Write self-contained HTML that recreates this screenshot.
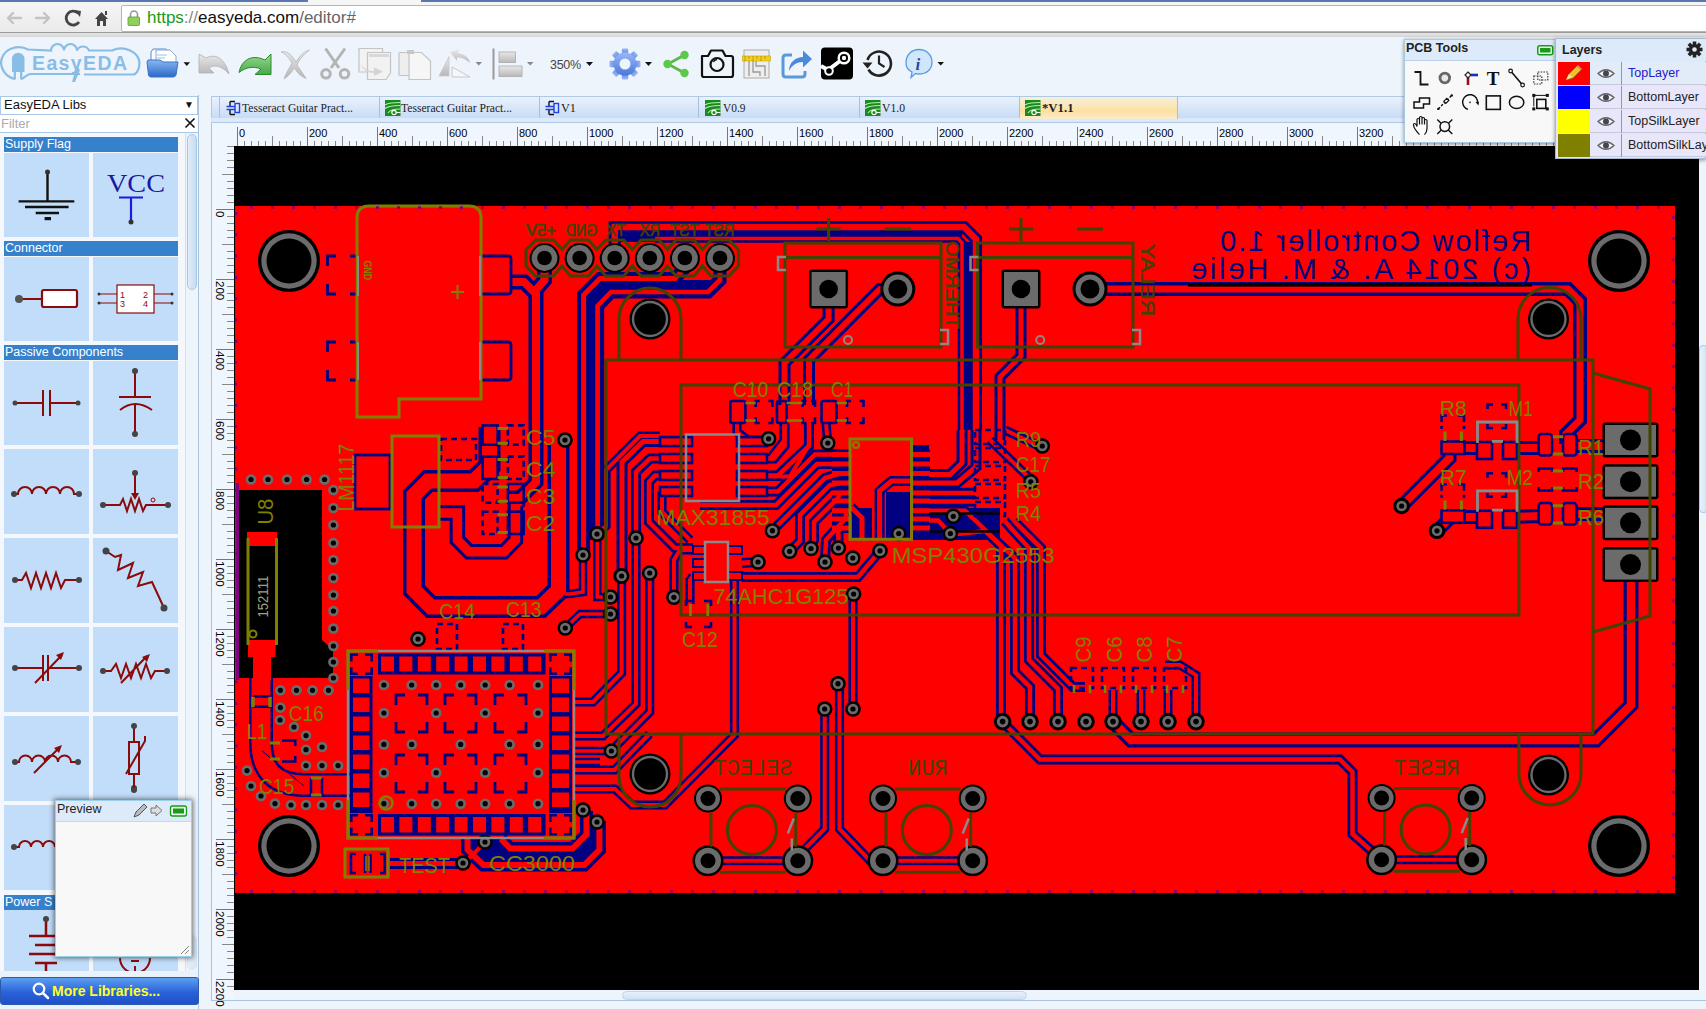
<!DOCTYPE html><html><head><meta charset="utf-8"><style>
*{margin:0;padding:0;box-sizing:border-box}
html,body{width:1706px;height:1009px;overflow:hidden;background:#eef4fc;font-family:"Liberation Sans",sans-serif;position:relative}
.a{position:absolute}
.t{position:absolute;white-space:nowrap}
</style></head><body>
<div class="a" style="left:0;top:0;width:1706px;height:37px;background:linear-gradient(#f6f6f6,#e9e9e9);border-bottom:1px solid #a9a9a9"></div><div class="a" style="left:0;top:0;width:308px;height:1.5px;background:#5a78b0"></div><div class="a" style="left:421px;top:0;width:1285px;height:1.5px;background:#5a78b0"></div><div class="a" style="left:121px;top:5px;width:1600px;height:27px;background:#fff;border:1px solid #b5b5b5;border-radius:2px"></div><div class="a" style="left:0;top:32px;width:1706px;height:5px;background:linear-gradient(#e4e4e4,#d8d8d8);border-top:1px solid #9a9a9a"></div><svg class="a" style="left:0;top:0" width="121" height="36">
<g stroke="#c4c4c4" stroke-width="2.4" fill="none" stroke-linecap="round" stroke-linejoin="round">
<path d="M8 18 H21 M8 18 L13 13 M8 18 L13 23"/>
<path d="M49 18 H36 M49 18 L44 13 M49 18 L44 23"/>
</g>
<path d="M78 13 A7 7 0 1 0 79 22" stroke="#444" stroke-width="2.8" fill="none"/>
<path d="M74 10 L81 11 L80 17 Z" fill="#444"/>
<path d="M95 19 L101.5 12 L108 19 L106 19 L106 26 L103 26 L103 21 L100 21 L100 26 L97 26 L97 19 Z" fill="#444"/>
<rect x="105" y="11" width="2" height="4" fill="#444"/>

</svg><svg class="a" style="left:125px;top:8px" width="20" height="22"><path d="M5.5 9.5 V6.5 A3.5 3.5 0 0 1 12.5 6.5 V9.5" stroke="#999" stroke-width="1.6" fill="none"/><rect x="3" y="9" width="11.5" height="8.5" rx="1" fill="#8fd05a" stroke="#5a9a2a" stroke-width="0.8"/></svg><div class="t" style="left:147px;top:8px;font-size:17px;line-height:20px;color:#444"><span style="color:#1a9a1a">https</span><span style="color:#888">://</span><span style="color:#111">easyeda.com</span><span style="color:#666">/editor#</span></div><div class="a" style="left:0;top:37px;width:1706px;height:58px;background:#eef4fc"></div><svg class="a" style="left:0;top:0" width="1000" height="95"><g fill="none" stroke="#88bde6" stroke-width="2.2">
<path d="M14.5 79 C4 76 -1 66 2 58 C5 49 18 44 28 49.5 L51 50.5 A6.5 6.5 0 0 1 64 50.5 A6.5 6.5 0 0 1 77 50.5 A6.5 6.5 0 0 1 89 50.5 L112 50.5 C124 45 139 52 139.5 63 C139.5 70 136 74.5 133 74.5 L84 74.5 M80 74 L30 74 C26 75 24 78 21.5 79"/>
</g>
<path d="M12 72 V59 A6.2 6.2 0 0 1 24.5 59 V72 Z" fill="#88bde6"/>
<path d="M14.8 72 V79.5 M21.2 72 V79.5" stroke="#88bde6" stroke-width="2.2"/>
<text x="32" y="69.5" font-family='"Liberation Sans",sans-serif' font-weight="bold" font-size="19.5" fill="#88bde6" textLength="96" lengthAdjust="spacing" letter-spacing="1">EasyEDA</text>
<path d="M76.5 66 L72 82 L75 82 L80 70 Z" fill="#88bde6"/><defs><linearGradient id="fg" x1="0" y1="0" x2="0" y2="1"><stop offset="0" stop-color="#8ab8f0"/><stop offset="1" stop-color="#2a6ac8"/></linearGradient>
<linearGradient id="gg" x1="0" y1="0" x2="0" y2="1"><stop offset="0" stop-color="#98d890"/><stop offset="1" stop-color="#48a848"/></linearGradient>
<linearGradient id="gr" x1="0" y1="0" x2="0" y2="1"><stop offset="0" stop-color="#e8e8e8"/><stop offset="1" stop-color="#b8b8b8"/></linearGradient>
<linearGradient id="gear" x1="0" y1="0" x2="0" y2="1"><stop offset="0" stop-color="#9ab8f8"/><stop offset="1" stop-color="#4a78d8"/></linearGradient></defs>
<path d="M151 62 V52 L153 49 H166 L172 54 V62 Z" fill="#f8fbff" stroke="#5a8ad0" stroke-width="1"/>
<path d="M156 50 H170 L176 56 V63 H156 Z" fill="#fff" stroke="#8aa8d0" stroke-width="1"/>
<path d="M157 55 H167 M157 58 H165" stroke="#9ac0e8" stroke-width="1"/>
<path d="M147 62 L148 60 H160 L163 62 H178 L176 75 Q175.5 77 173 77 H151 Q149 77 148.5 75 Z" fill="url(#fg)" stroke="#3a72c8" stroke-width="1"/>
<path d="M183.5 62.3 H190 L186.8 66 Z" fill="#111"/><path d="M199 54 L199 73 L214 73 L209 68 C215 64 222 66 229 74 C226 62 218 52 206 58 Z" fill="url(#gr)" stroke="#b0b0b0" stroke-width="0.8"/><path d="M271 54 L271 74.5 L255 74.5 L261 69 C254 66 246 67 239 72.5 C241 62 250 53 265 60 Z" fill="url(#gg)" stroke="#2a8a2a" stroke-width="1"/><path d="M281 52 C288 50 292 56 296 62 C300 56 304 51 309.5 50 C303 55 299 60 297 65 C301 71 304 75 306 78.5 C300 76 297 72 294.5 68 C291 73 288 77 284 78.7 C286 73 290 67 292 63 C289 58 285 53 281 52 Z" fill="url(#gr)" stroke="#a8a8a8" stroke-width="0.6"/><g stroke="#b4b4b4" stroke-width="3" fill="none"><path d="M325.5 48.5 L339 68 M345 48.5 L331 68"/><circle cx="326" cy="73.8" r="4.3"/><circle cx="344.5" cy="73.8" r="4.3"/></g><g fill="#f2f2f2" stroke="#c4c4c4" stroke-width="1.2"><path d="M359 48.5 H382.5 V72 H359 Z"/><path d="M367.5 52.5 H390.5 V73 L386 79.5 H367.5 Z"/></g><rect x="369" y="54" width="20" height="3" fill="#d8d8d8"/><path d="M361 64 Q366 72 374 71 V67.5 L383 71.5 L374 76 V73 Q364 73 361 64 Z" fill="#d4d4d4"/><g fill="#eeeeee" stroke="#c4c4c4" stroke-width="1.2"><rect x="399" y="52.5" width="22.5" height="23" rx="1"/><path d="M409 52.5 H421.5 L430.5 61 V79.5 H409 Z" fill="#f6f6f6"/></g><path d="M407 50 H414 V54 H407 Z" fill="#c8c8c8"/><path d="M439 76 L449 56.5 V76 Z" fill="url(#gr)" stroke="#c8c8c8" stroke-width="0.8"/><path d="M452 67 L470 77 H452 Z" fill="#f4f8fc" stroke="#c8c8c8" stroke-width="1"/><path d="M450 52 L459 49.5 L458 53 C465 54 469 58 470 63 C466 59 461 57 457 57.5 L457 61 Z" fill="url(#gr)"/><path d="M475.5 62 H482 L478.8 65.5 Z" fill="#888"/><rect x="492.5" y="48.5" width="2" height="31" fill="#999"/><rect x="499" y="52" width="16.5" height="10.5" fill="url(#gr)" stroke="#aaa" stroke-width="0.8"/><rect x="499" y="66" width="23" height="10.5" fill="url(#gr)" stroke="#aaa" stroke-width="0.8"/><path d="M527 62 H533.5 L530.2 65.5 Z" fill="#888"/><text x="550" y="69" font-family='"Liberation Sans",sans-serif' font-size="12.5" fill="#444" textLength="31">350%</text><path d="M586 62 H593 L589.5 66 Z" fill="#111"/><g transform="translate(625,64)"><g fill="url(#gear)"><rect x="-3.2" y="-15.5" width="6.4" height="8" rx="1" transform="rotate(0)"/><rect x="-3.2" y="-15.5" width="6.4" height="8" rx="1" transform="rotate(45)"/><rect x="-3.2" y="-15.5" width="6.4" height="8" rx="1" transform="rotate(90)"/><rect x="-3.2" y="-15.5" width="6.4" height="8" rx="1" transform="rotate(135)"/><rect x="-3.2" y="-15.5" width="6.4" height="8" rx="1" transform="rotate(180)"/><rect x="-3.2" y="-15.5" width="6.4" height="8" rx="1" transform="rotate(225)"/><rect x="-3.2" y="-15.5" width="6.4" height="8" rx="1" transform="rotate(270)"/><rect x="-3.2" y="-15.5" width="6.4" height="8" rx="1" transform="rotate(315)"/></g><circle r="11.5" fill="url(#gear)"/><circle r="5.5" fill="#eef4fc"/></g><path d="M645 62 H652 L648.5 66 Z" fill="#111"/><path d="M668 64 L684.5 55 M668 64 L684.5 73" stroke="#5ab84a" stroke-width="2.6"/><g fill="#5cc84c"><circle cx="667.5" cy="64" r="4.2"/><circle cx="684.5" cy="55" r="4.2"/><circle cx="684.5" cy="73" r="4.2"/></g><path d="M702 56 H708 L711 50.5 H722.5 L725.5 56 H731 Q733 56 733 58 V75 Q733 77 731 77 H704 Q702 77 702 75 Z" fill="none" stroke="#111" stroke-width="2.2" stroke-linejoin="round"/><circle cx="717" cy="64.5" r="6.5" fill="none" stroke="#111" stroke-width="2.2"/><path d="M713.5 62 A4 4 0 0 1 717 59.5" stroke="#111" stroke-width="1.3" fill="none"/><rect x="744" y="50" width="25" height="28" fill="#eee" stroke="#aaa" stroke-width="1"/><path d="M749 58 V76 M753 58 V72 H760 V76 M756 58 V66 H765 V76" stroke="#999" stroke-width="1.3" fill="none"/><rect x="742.5" y="56" width="28" height="5" fill="#f0d020" stroke="#c8a010" stroke-width="0.6"/><path d="M745 56 V61 M749 56 V59 M753 56 V61 M757 56 V59 M761 56 V61 M765 56 V59" stroke="#a08000" stroke-width="0.6"/><path d="M792 55 H786 Q783 55 783 58 V74 Q783 77 786 77 H802 Q805 77 805 74 V71" stroke="#5a98d8" stroke-width="3" fill="none"/><path d="M789 71 C789 62 796 57 803 57 V50.5 L812 59 L803 67.5 V62 C797 62 792 65 789 71 Z" fill="#4a8ad8"/><rect x="821" y="47.5" width="32" height="32" rx="4" fill="#000"/><circle cx="844" cy="58" r="5.3" fill="none" stroke="#fff" stroke-width="2.5"/><circle cx="844" cy="58" r="2.2" fill="#fff"/><path d="M821 66 L828 70 L840 61" stroke="#fff" stroke-width="4" fill="none"/><circle cx="829" cy="71" r="3.8" fill="#000" stroke="#fff" stroke-width="2"/><path d="M867.5 60 A12 12 0 1 1 868.5 69.5" stroke="#222" stroke-width="2.6" fill="none"/><path d="M862.5 62.5 L872.5 62.5 L867.5 68.5 Z" fill="#222"/><path d="M879 55.5 V63.5 L884.5 67" stroke="#222" stroke-width="2.2" fill="none"/><path d="M906 63 C906 54.5 912 49.5 919 49.5 C926 49.5 932 54.5 932 62 C932 70 926 74 919 74 C917.5 74 916.5 74 915.5 73.5 L911 77.5 L912 72 C908 70 906 67 906 63 Z" fill="#d0e6fa" stroke="#5a9ae0" stroke-width="1.3"/><text x="915.5" y="70" font-family='"Liberation Serif",serif' font-style="italic" font-weight="bold" font-size="17" fill="#1a4ab0">i</text><path d="M937.5 62 H944 L940.7 65.5 Z" fill="#111"/></svg><div class="a" style="left:0;top:95px;width:199px;height:914px;background:#eaf2fb;border-right:1px solid #a8c4e0"></div><div class="a" style="left:0;top:96px;width:198px;height:19px;background:#fff;border:1px solid #a8c8e8"></div><div class="t" style="left:4px;top:97px;font-size:13px;line-height:16px;color:#111">EasyEDA Libs</div><div class="t" style="left:184px;top:98px;font-size:10px;line-height:14px;color:#111">&#9660;</div><div class="a" style="left:0;top:115px;width:198px;height:18px;background:#fff;border-bottom:1px solid #a8c8e8"></div><div class="t" style="left:1px;top:116px;font-size:13px;line-height:15px;color:#aaa">Filter</div><svg class="a" style="left:184px;top:117px" width="12" height="12"><path d="M1.5 1.5 L10.5 10.5 M10.5 1.5 L1.5 10.5" stroke="#111" stroke-width="1.6"/></svg><div class="a" style="left:0;top:133px;width:198px;height:838px;background:#f4f8fd"></div><div class="a" style="left:185px;top:133px;width:13px;height:838px;background:#eef4fb;border-left:1px solid #d0e0f0"></div><div class="a" style="left:187px;top:134px;width:10px;height:156px;background:linear-gradient(90deg,#e0ecf8,#c8dcf2);border:1px solid #a8c8ea;border-radius:5px"></div><div class="a" style="left:187px;top:935px;width:10px;height:35px;background:linear-gradient(90deg,#e0ecf8,#c8dcf2);border:1px solid #c8d8ea;border-radius:5px;opacity:.6"></div><div class="a" style="left:4px;top:137px;width:174px;height:15px;background:#3681cc"></div><div class="t" style="left:5px;top:137px;font-size:12.5px;line-height:15px;color:#fff">Supply Flag</div><div class="a" style="left:4px;top:153px;width:85px;height:84px;background:#c2ddf9"></div><div class="a" style="left:93px;top:153px;width:85px;height:84px;background:#c2ddf9"></div><div class="a" style="left:4px;top:241px;width:174px;height:15px;background:#3681cc"></div><div class="t" style="left:5px;top:241px;font-size:12.5px;line-height:15px;color:#fff">Connector</div><div class="a" style="left:4px;top:257px;width:85px;height:84px;background:#c2ddf9"></div><div class="a" style="left:93px;top:257px;width:85px;height:84px;background:#c2ddf9"></div><div class="a" style="left:4px;top:345px;width:174px;height:15px;background:#3681cc"></div><div class="t" style="left:5px;top:345px;font-size:12.5px;line-height:15px;color:#fff">Passive Components</div><div class="a" style="left:4px;top:361px;width:85px;height:84px;background:#c2ddf9"></div><div class="a" style="left:93px;top:361px;width:85px;height:84px;background:#c2ddf9"></div><div class="a" style="left:4px;top:449px;width:85px;height:85px;background:#c2ddf9"></div><div class="a" style="left:93px;top:449px;width:85px;height:85px;background:#c2ddf9"></div><div class="a" style="left:4px;top:538px;width:85px;height:85px;background:#c2ddf9"></div><div class="a" style="left:93px;top:538px;width:85px;height:85px;background:#c2ddf9"></div><div class="a" style="left:4px;top:627px;width:85px;height:85px;background:#c2ddf9"></div><div class="a" style="left:93px;top:627px;width:85px;height:85px;background:#c2ddf9"></div><div class="a" style="left:4px;top:716px;width:85px;height:85px;background:#c2ddf9"></div><div class="a" style="left:93px;top:716px;width:85px;height:85px;background:#c2ddf9"></div><div class="a" style="left:4px;top:805px;width:85px;height:85px;background:#c2ddf9"></div><div class="a" style="left:93px;top:805px;width:85px;height:85px;background:#c2ddf9"></div><div class="a" style="left:4px;top:895px;width:174px;height:15px;background:#3681cc"></div><div class="t" style="left:5px;top:895px;font-size:12.5px;line-height:15px;color:#fff">Power S</div><div class="a" style="left:4px;top:910px;width:85px;height:61px;background:#c2ddf9"></div><div class="a" style="left:93px;top:910px;width:85px;height:61px;background:#c2ddf9"></div><svg class="a" style="left:0;top:133px" width="185" height="838"><g transform="translate(0,-133)"><path d="M47.5 172 V201.4 M18.6 201.4 H74.3 M25 207 H68.6 M35.7 213 H59 " stroke="#111" stroke-width="2.4"/><rect x="44.6" y="217" width="6.4" height="3.2" fill="#111"/><circle cx="47.5" cy="172" r="2.5" fill="#333"/></g><g transform="translate(0,-133)"><text x="107" y="192" font-family='"Liberation Serif",serif' font-size="25" fill="#1a1aa0" textLength="58" lengthAdjust="spacingAndGlyphs">VCC</text><path d="M119 197.5 H143 M131 197.5 V222" stroke="#1a1ae0" stroke-width="2.2"/><circle cx="131" cy="222" r="2.5" fill="#333"/></g><g transform="translate(0,-133)"><path d="M19 299 H42" stroke="#8b0a0a" stroke-width="2"/><rect x="42" y="290" width="35" height="17" rx="2" fill="#fff" stroke="#8b0a0a" stroke-width="2.2"/><circle cx="19" cy="299" r="4" fill="#555"/></g><g transform="translate(0,-133)"><rect x="117" y="285" width="37" height="28" fill="#fff" stroke="#8b0a0a" stroke-width="1.2"/><path d="M99 294 H117 M99 303 H117 M154 294 H172 M154 303 H172" stroke="#8b0a0a" stroke-width="1.2"/><g fill="#333"><circle cx="99" cy="294" r="1.5"/><circle cx="99" cy="303" r="1.5"/><circle cx="172" cy="294" r="1.5"/><circle cx="172" cy="303" r="1.5"/></g><text x="120" y="298" font-size="9" fill="#8b0a0a" font-family='"Liberation Sans",sans-serif'>1</text><text x="120" y="307" font-size="9" fill="#8b0a0a" font-family='"Liberation Sans",sans-serif'>3</text><text x="143" y="298" font-size="9" fill="#8b0a0a" font-family='"Liberation Sans",sans-serif'>2</text><text x="143" y="307" font-size="9" fill="#8b0a0a" font-family='"Liberation Sans",sans-serif'>4</text></g><g transform="translate(0,-133)"><path d="M15 403 H43 M50 403 H78 M43 390 V416 M50 390 V416" stroke="#8b0a0a" stroke-width="2"/><circle cx="15" cy="403" r="2.5" fill="#444"/><circle cx="78" cy="403" r="2.5" fill="#444"/></g><g transform="translate(0,-133)"><path d="M135 371 V397 M119 397 H151 M135 404 V434" stroke="#8b0a0a" stroke-width="2"/><path d="M120 410 Q135 398 152 410" stroke="#8b0a0a" stroke-width="2" fill="none"/><circle cx="135" cy="371" r="3" fill="#444"/><circle cx="135" cy="434" r="3" fill="#444"/></g><g transform="translate(0,-133)"><path d="M14 494 H18 A7 7 0 0 1 32 494 A7 7 0 0 1 46 494 A7 7 0 0 1 60 494 A7 7 0 0 1 74 494 H79" stroke="#8b0a0a" stroke-width="2" fill="none"/><circle cx="14" cy="494" r="3" fill="#444"/><circle cx="79" cy="494" r="3" fill="#444"/></g><g transform="translate(0,-133)"><path d="M103 505 H120 L123 499 L127 511 L131 499 L135 511 L139 499 L143 511 L146 505 H168 M135 473 V495" stroke="#8b0a0a" stroke-width="2" fill="none"/><path d="M131 493 L139 493 L135 500 Z" fill="#8b0a0a"/><circle cx="153" cy="500" r="2" fill="none" stroke="#8b0a0a"/><circle cx="103" cy="505" r="3" fill="#444"/><circle cx="168" cy="505" r="3" fill="#444"/><circle cx="135" cy="473" r="3" fill="#444"/></g><g transform="translate(0,-133)"><path d="M15 580 H22 L26 573 L31 588 L36 573 L41 588 L46 573 L51 588 L56 573 L61 588 L65 580 H79" stroke="#8b0a0a" stroke-width="2" fill="none"/><circle cx="15" cy="580" r="3" fill="#444"/><circle cx="79" cy="580" r="3" fill="#444"/></g><g transform="translate(0,-133)"><path d="M106 551 L115 557 L121 555 L118 570 L133 563 L128 578 L143 572 L138 586 L152 582 L158 595 L164 608" stroke="#8b0a0a" stroke-width="2" fill="none"/><circle cx="106" cy="551" r="3.5" fill="#444"/><circle cx="164" cy="608" r="3.5" fill="#444"/></g><g transform="translate(0,-133)"><path d="M15 668 H43 M48 668 H79 M43 655 V681 M48 655 V681 M35 683 L62 655" stroke="#8b0a0a" stroke-width="2" fill="none"/><path d="M64 652 L56 655 L61 660 Z" fill="#8b0a0a"/><circle cx="15" cy="668" r="3" fill="#444"/><circle cx="79" cy="668" r="3" fill="#444"/></g><g transform="translate(0,-133)"><path d="M103 671 H111 L116 664 L121 678 L126 664 L131 678 L136 664 L141 678 L146 664 L151 678 L155 671 H167 M121 683 L147 656" stroke="#8b0a0a" stroke-width="2" fill="none"/><path d="M150 654 L142 657 L147 662 Z" fill="#8b0a0a"/><circle cx="103" cy="671" r="3" fill="#444"/><circle cx="167" cy="671" r="3" fill="#444"/></g><g transform="translate(0,-133)"><path d="M15 762 H19 A6.5 6.5 0 0 1 32 762 A6.5 6.5 0 0 1 45 762 A6.5 6.5 0 0 1 58 762 A6.5 6.5 0 0 1 71 762 H78 M34 773 L59 748" stroke="#8b0a0a" stroke-width="2" fill="none"/><path d="M62 745 L54 748 L59 753 Z" fill="#8b0a0a"/><circle cx="15" cy="762" r="3" fill="#444"/><circle cx="78" cy="762" r="3" fill="#444"/></g><g transform="translate(0,-133)"><path d="M134 726 V742 M134 774 V790 M126 774 L145 741 V736" stroke="#8b0a0a" stroke-width="2" fill="none"/><rect x="129" y="742" width="10" height="32" fill="none" stroke="#8b0a0a" stroke-width="2"/><circle cx="134" cy="726" r="3" fill="#444"/><circle cx="134" cy="790" r="3" fill="#444"/></g><g transform="translate(0,-133)"><path d="M14 847 H19 A6 6 0 0 1 31 847 A6 6 0 0 1 43 847 A6 6 0 0 1 55 847" stroke="#8b0a0a" stroke-width="2" fill="none"/><circle cx="14" cy="847" r="3" fill="#444"/><circle cx="134" cy="788" r="3" fill="#444"/><path d="M134 780 V788" stroke="#8b0a0a" stroke-width="2"/></g><g transform="translate(0,-133)"><path d="M46 920 V935 M29 936 H57 M35 945 H57 M29 954 H57 M35 963 H57 M46 963 V971" stroke="#8b0a0a" stroke-width="2.5"/><circle cx="46" cy="919" r="3" fill="#444"/><path d="M120 958 A15 15 0 0 0 150 958" stroke="#8b0a0a" stroke-width="2" fill="none"/><path d="M131 961 H139 M135 966 V971" stroke="#8b0a0a" stroke-width="2"/></g></svg><div class="a" style="left:0;top:977px;width:199px;height:28px;background:linear-gradient(#5d9ef0,#2a62d8 55%,#1e50c8);border:1px solid #2a5ab0;border-radius:3px"></div><svg class="a" style="left:32px;top:982px" width="18" height="18"><circle cx="7" cy="7" r="5.3" fill="none" stroke="#fff" stroke-width="2.2"/><path d="M11 11 L16 16" stroke="#fff" stroke-width="2.5" stroke-linecap="round"/></svg><div class="t" style="left:52px;top:983px;font-size:14px;line-height:16px;font-weight:bold;color:#ffff20">More Libraries...</div><div class="a" style="left:211px;top:95px;width:1495px;height:28px;background:#eef4fc"></div><div class="a" style="left:211px;top:96px;width:1495px;height:23px;background:linear-gradient(#eaf2fd,#c8dcf6);border:1px solid #b0c8e4"></div><div class="a" style="left:211px;top:118px;width:1495px;height:5px;background:#dde9f8;border-bottom:1px solid #b0c8e4"></div><div class="a" style="left:218.5px;top:97px;width:1px;height:21px;background:#a8c0dc"></div><svg class="a" style="left:226px;top:100px" width="16" height="16"><path d="M4 1.5 H9 M4 14.5 H9 M4 1.5 V6 M4 10 V14.5" stroke="#111" stroke-width="1.4" fill="none"/><rect x="9" y="3.5" width="4.5" height="9" fill="none" stroke="#2040e0" stroke-width="1.4"/><path d="M0.5 6.5 H9 M0.5 9.5 H9" stroke="#2040e0" stroke-width="1.4"/></svg><div class="t" style="left:242px;top:98.5px;font-family:'Liberation Serif', serif;font-size:13.5px;line-height:16px;color:#222"><svg width="115" height="16" style="display:block;overflow:visible"><text x="0" y="12.5" font-family="Liberation Serif, serif" font-size="13.5" fill="#222" textLength="111" lengthAdjust="spacingAndGlyphs">Tesseract Guitar Pract...</text></svg></div><div class="a" style="left:378.5px;top:97px;width:1px;height:21px;background:#a8c0dc"></div><svg class="a" style="left:385px;top:99.5px" width="16" height="17"><rect x="0" y="0" width="15.5" height="16" fill="#1a8a1a"/><path d="M0 5 Q4 2.5 15.5 2.5 M0 8.5 Q4 5.5 15.5 5.5 M3 13 Q5 9 15.5 9" stroke="#b8ecb8" stroke-width="1.1" fill="none"/><circle cx="9" cy="12.5" r="2.2" fill="none" stroke="#fff" stroke-width="1.2"/><path d="M11 12.5 H15.5" stroke="#fff" stroke-width="1.1"/></svg><div class="t" style="left:401px;top:98.5px;font-family:'Liberation Serif', serif;font-size:13.5px;line-height:16px;color:#222"><svg width="115" height="16" style="display:block;overflow:visible"><text x="0" y="12.5" font-family="Liberation Serif, serif" font-size="13.5" fill="#222" textLength="111" lengthAdjust="spacingAndGlyphs">Tesseract Guitar Pract...</text></svg></div><div class="a" style="left:538.7px;top:97px;width:1px;height:21px;background:#a8c0dc"></div><svg class="a" style="left:545px;top:100px" width="16" height="16"><path d="M4 1.5 H9 M4 14.5 H9 M4 1.5 V6 M4 10 V14.5" stroke="#111" stroke-width="1.4" fill="none"/><rect x="9" y="3.5" width="4.5" height="9" fill="none" stroke="#2040e0" stroke-width="1.4"/><path d="M0.5 6.5 H9 M0.5 9.5 H9" stroke="#2040e0" stroke-width="1.4"/></svg><div class="t" style="left:561px;top:98.5px;font-family:'Liberation Serif', serif;font-size:13.5px;line-height:16px;color:#222"><svg width="19" height="16" style="display:block;overflow:visible"><text x="0" y="12.5" font-family="Liberation Serif, serif" font-size="13.5" fill="#222" textLength="15" lengthAdjust="spacingAndGlyphs">V1</text></svg></div><div class="a" style="left:698.4px;top:97px;width:1px;height:21px;background:#a8c0dc"></div><svg class="a" style="left:705px;top:99.5px" width="16" height="17"><rect x="0" y="0" width="15.5" height="16" fill="#1a8a1a"/><path d="M0 5 Q4 2.5 15.5 2.5 M0 8.5 Q4 5.5 15.5 5.5 M3 13 Q5 9 15.5 9" stroke="#b8ecb8" stroke-width="1.1" fill="none"/><circle cx="9" cy="12.5" r="2.2" fill="none" stroke="#fff" stroke-width="1.2"/><path d="M11 12.5 H15.5" stroke="#fff" stroke-width="1.1"/></svg><div class="t" style="left:722.6px;top:98.5px;font-family:'Liberation Serif', serif;font-size:13.5px;line-height:16px;color:#222"><svg width="26.5" height="16" style="display:block;overflow:visible"><text x="0" y="12.5" font-family="Liberation Serif, serif" font-size="13.5" fill="#222" textLength="22.5" lengthAdjust="spacingAndGlyphs">V0.9</text></svg></div><div class="a" style="left:859px;top:97px;width:1px;height:21px;background:#a8c0dc"></div><svg class="a" style="left:864.5px;top:99.5px" width="16" height="17"><rect x="0" y="0" width="15.5" height="16" fill="#1a8a1a"/><path d="M0 5 Q4 2.5 15.5 2.5 M0 8.5 Q4 5.5 15.5 5.5 M3 13 Q5 9 15.5 9" stroke="#b8ecb8" stroke-width="1.1" fill="none"/><circle cx="9" cy="12.5" r="2.2" fill="none" stroke="#fff" stroke-width="1.2"/><path d="M11 12.5 H15.5" stroke="#fff" stroke-width="1.1"/></svg><div class="t" style="left:882px;top:98.5px;font-family:'Liberation Serif', serif;font-size:13.5px;line-height:16px;color:#222"><svg width="27" height="16" style="display:block;overflow:visible"><text x="0" y="12.5" font-family="Liberation Serif, serif" font-size="13.5" fill="#222" textLength="23" lengthAdjust="spacingAndGlyphs">V1.0</text></svg></div><div class="a" style="left:1018.5px;top:97px;width:1px;height:21px;background:#a8c0dc"></div><div class="a" style="left:1019.5px;top:97px;width:158.5px;height:22px;background:linear-gradient(#f6f0e0,#fde0a0 65%,#f8ecd0);border-right:1px solid #a8c0dc"></div><svg class="a" style="left:1024.6px;top:99.5px" width="16" height="17"><rect x="0" y="0" width="15.5" height="16" fill="#1a8a1a"/><path d="M0 5 Q4 2.5 15.5 2.5 M0 8.5 Q4 5.5 15.5 5.5 M3 13 Q5 9 15.5 9" stroke="#b8ecb8" stroke-width="1.1" fill="none"/><circle cx="9" cy="12.5" r="2.2" fill="none" stroke="#fff" stroke-width="1.2"/><path d="M11 12.5 H15.5" stroke="#fff" stroke-width="1.1"/></svg><div class="t" style="left:1042px;top:98.5px;font-family:'Liberation Serif', serif;font-size:13.5px;line-height:16px;color:#222;font-weight:bold"><svg width="35.5" height="16" style="display:block;overflow:visible"><text x="0" y="12.5" font-family="Liberation Serif, serif" font-size="13.5" fill="#222" textLength="31.5" lengthAdjust="spacingAndGlyphs" font-weight='bold'>*V1.1</text></svg></div><div class="a" style="left:211px;top:123px;width:1495px;height:23px;background:#f0f6fd"></div><div class="a" style="left:211px;top:123px;width:23px;height:877px;background:#f0f6fd;border-left:1px solid #a8c4e0"></div><svg class="a" style="left:0;top:0" width="1706" height="1009" font-family='"Liberation Sans", sans-serif' fill="#000"><line x1="237.5" y1="127" x2="237.5" y2="146" stroke="#777" stroke-width="1"/><text x="239.0" y="137" font-size="11">0</text><line x1="244.5" y1="141" x2="244.5" y2="146" stroke="#888" stroke-width="1"/><line x1="251.5" y1="141" x2="251.5" y2="146" stroke="#888" stroke-width="1"/><line x1="258.5" y1="141" x2="258.5" y2="146" stroke="#888" stroke-width="1"/><line x1="265.5" y1="141" x2="265.5" y2="146" stroke="#888" stroke-width="1"/><line x1="272.5" y1="136" x2="272.5" y2="146" stroke="#888" stroke-width="1"/><line x1="279.5" y1="141" x2="279.5" y2="146" stroke="#888" stroke-width="1"/><line x1="286.5" y1="141" x2="286.5" y2="146" stroke="#888" stroke-width="1"/><line x1="293.5" y1="141" x2="293.5" y2="146" stroke="#888" stroke-width="1"/><line x1="300.5" y1="141" x2="300.5" y2="146" stroke="#888" stroke-width="1"/><line x1="307.5" y1="127" x2="307.5" y2="146" stroke="#777" stroke-width="1"/><text x="309.0" y="137" font-size="11">200</text><line x1="314.5" y1="141" x2="314.5" y2="146" stroke="#888" stroke-width="1"/><line x1="321.5" y1="141" x2="321.5" y2="146" stroke="#888" stroke-width="1"/><line x1="328.5" y1="141" x2="328.5" y2="146" stroke="#888" stroke-width="1"/><line x1="335.5" y1="141" x2="335.5" y2="146" stroke="#888" stroke-width="1"/><line x1="342.5" y1="136" x2="342.5" y2="146" stroke="#888" stroke-width="1"/><line x1="349.5" y1="141" x2="349.5" y2="146" stroke="#888" stroke-width="1"/><line x1="356.5" y1="141" x2="356.5" y2="146" stroke="#888" stroke-width="1"/><line x1="363.5" y1="141" x2="363.5" y2="146" stroke="#888" stroke-width="1"/><line x1="370.5" y1="141" x2="370.5" y2="146" stroke="#888" stroke-width="1"/><line x1="377.5" y1="127" x2="377.5" y2="146" stroke="#777" stroke-width="1"/><text x="379.0" y="137" font-size="11">400</text><line x1="384.5" y1="141" x2="384.5" y2="146" stroke="#888" stroke-width="1"/><line x1="391.5" y1="141" x2="391.5" y2="146" stroke="#888" stroke-width="1"/><line x1="398.5" y1="141" x2="398.5" y2="146" stroke="#888" stroke-width="1"/><line x1="405.5" y1="141" x2="405.5" y2="146" stroke="#888" stroke-width="1"/><line x1="412.5" y1="136" x2="412.5" y2="146" stroke="#888" stroke-width="1"/><line x1="419.5" y1="141" x2="419.5" y2="146" stroke="#888" stroke-width="1"/><line x1="426.5" y1="141" x2="426.5" y2="146" stroke="#888" stroke-width="1"/><line x1="433.5" y1="141" x2="433.5" y2="146" stroke="#888" stroke-width="1"/><line x1="440.5" y1="141" x2="440.5" y2="146" stroke="#888" stroke-width="1"/><line x1="447.5" y1="127" x2="447.5" y2="146" stroke="#777" stroke-width="1"/><text x="449.0" y="137" font-size="11">600</text><line x1="454.5" y1="141" x2="454.5" y2="146" stroke="#888" stroke-width="1"/><line x1="461.5" y1="141" x2="461.5" y2="146" stroke="#888" stroke-width="1"/><line x1="468.5" y1="141" x2="468.5" y2="146" stroke="#888" stroke-width="1"/><line x1="475.5" y1="141" x2="475.5" y2="146" stroke="#888" stroke-width="1"/><line x1="482.5" y1="136" x2="482.5" y2="146" stroke="#888" stroke-width="1"/><line x1="489.5" y1="141" x2="489.5" y2="146" stroke="#888" stroke-width="1"/><line x1="496.5" y1="141" x2="496.5" y2="146" stroke="#888" stroke-width="1"/><line x1="503.5" y1="141" x2="503.5" y2="146" stroke="#888" stroke-width="1"/><line x1="510.5" y1="141" x2="510.5" y2="146" stroke="#888" stroke-width="1"/><line x1="517.5" y1="127" x2="517.5" y2="146" stroke="#777" stroke-width="1"/><text x="519.0" y="137" font-size="11">800</text><line x1="524.5" y1="141" x2="524.5" y2="146" stroke="#888" stroke-width="1"/><line x1="531.5" y1="141" x2="531.5" y2="146" stroke="#888" stroke-width="1"/><line x1="538.5" y1="141" x2="538.5" y2="146" stroke="#888" stroke-width="1"/><line x1="545.5" y1="141" x2="545.5" y2="146" stroke="#888" stroke-width="1"/><line x1="552.5" y1="136" x2="552.5" y2="146" stroke="#888" stroke-width="1"/><line x1="559.5" y1="141" x2="559.5" y2="146" stroke="#888" stroke-width="1"/><line x1="566.5" y1="141" x2="566.5" y2="146" stroke="#888" stroke-width="1"/><line x1="573.5" y1="141" x2="573.5" y2="146" stroke="#888" stroke-width="1"/><line x1="580.5" y1="141" x2="580.5" y2="146" stroke="#888" stroke-width="1"/><line x1="587.5" y1="127" x2="587.5" y2="146" stroke="#777" stroke-width="1"/><text x="589.0" y="137" font-size="11">1000</text><line x1="594.5" y1="141" x2="594.5" y2="146" stroke="#888" stroke-width="1"/><line x1="601.5" y1="141" x2="601.5" y2="146" stroke="#888" stroke-width="1"/><line x1="608.5" y1="141" x2="608.5" y2="146" stroke="#888" stroke-width="1"/><line x1="615.5" y1="141" x2="615.5" y2="146" stroke="#888" stroke-width="1"/><line x1="622.5" y1="136" x2="622.5" y2="146" stroke="#888" stroke-width="1"/><line x1="629.5" y1="141" x2="629.5" y2="146" stroke="#888" stroke-width="1"/><line x1="636.5" y1="141" x2="636.5" y2="146" stroke="#888" stroke-width="1"/><line x1="643.5" y1="141" x2="643.5" y2="146" stroke="#888" stroke-width="1"/><line x1="650.5" y1="141" x2="650.5" y2="146" stroke="#888" stroke-width="1"/><line x1="657.5" y1="127" x2="657.5" y2="146" stroke="#777" stroke-width="1"/><text x="659.0" y="137" font-size="11">1200</text><line x1="664.5" y1="141" x2="664.5" y2="146" stroke="#888" stroke-width="1"/><line x1="671.5" y1="141" x2="671.5" y2="146" stroke="#888" stroke-width="1"/><line x1="678.5" y1="141" x2="678.5" y2="146" stroke="#888" stroke-width="1"/><line x1="685.5" y1="141" x2="685.5" y2="146" stroke="#888" stroke-width="1"/><line x1="692.5" y1="136" x2="692.5" y2="146" stroke="#888" stroke-width="1"/><line x1="699.5" y1="141" x2="699.5" y2="146" stroke="#888" stroke-width="1"/><line x1="706.5" y1="141" x2="706.5" y2="146" stroke="#888" stroke-width="1"/><line x1="713.5" y1="141" x2="713.5" y2="146" stroke="#888" stroke-width="1"/><line x1="720.5" y1="141" x2="720.5" y2="146" stroke="#888" stroke-width="1"/><line x1="727.5" y1="127" x2="727.5" y2="146" stroke="#777" stroke-width="1"/><text x="729.0" y="137" font-size="11">1400</text><line x1="734.5" y1="141" x2="734.5" y2="146" stroke="#888" stroke-width="1"/><line x1="741.5" y1="141" x2="741.5" y2="146" stroke="#888" stroke-width="1"/><line x1="748.5" y1="141" x2="748.5" y2="146" stroke="#888" stroke-width="1"/><line x1="755.5" y1="141" x2="755.5" y2="146" stroke="#888" stroke-width="1"/><line x1="762.5" y1="136" x2="762.5" y2="146" stroke="#888" stroke-width="1"/><line x1="769.5" y1="141" x2="769.5" y2="146" stroke="#888" stroke-width="1"/><line x1="776.5" y1="141" x2="776.5" y2="146" stroke="#888" stroke-width="1"/><line x1="783.5" y1="141" x2="783.5" y2="146" stroke="#888" stroke-width="1"/><line x1="790.5" y1="141" x2="790.5" y2="146" stroke="#888" stroke-width="1"/><line x1="797.5" y1="127" x2="797.5" y2="146" stroke="#777" stroke-width="1"/><text x="799.0" y="137" font-size="11">1600</text><line x1="804.5" y1="141" x2="804.5" y2="146" stroke="#888" stroke-width="1"/><line x1="811.5" y1="141" x2="811.5" y2="146" stroke="#888" stroke-width="1"/><line x1="818.5" y1="141" x2="818.5" y2="146" stroke="#888" stroke-width="1"/><line x1="825.5" y1="141" x2="825.5" y2="146" stroke="#888" stroke-width="1"/><line x1="832.5" y1="136" x2="832.5" y2="146" stroke="#888" stroke-width="1"/><line x1="839.5" y1="141" x2="839.5" y2="146" stroke="#888" stroke-width="1"/><line x1="846.5" y1="141" x2="846.5" y2="146" stroke="#888" stroke-width="1"/><line x1="853.5" y1="141" x2="853.5" y2="146" stroke="#888" stroke-width="1"/><line x1="860.5" y1="141" x2="860.5" y2="146" stroke="#888" stroke-width="1"/><line x1="867.5" y1="127" x2="867.5" y2="146" stroke="#777" stroke-width="1"/><text x="869.0" y="137" font-size="11">1800</text><line x1="874.5" y1="141" x2="874.5" y2="146" stroke="#888" stroke-width="1"/><line x1="881.5" y1="141" x2="881.5" y2="146" stroke="#888" stroke-width="1"/><line x1="888.5" y1="141" x2="888.5" y2="146" stroke="#888" stroke-width="1"/><line x1="895.5" y1="141" x2="895.5" y2="146" stroke="#888" stroke-width="1"/><line x1="902.5" y1="136" x2="902.5" y2="146" stroke="#888" stroke-width="1"/><line x1="909.5" y1="141" x2="909.5" y2="146" stroke="#888" stroke-width="1"/><line x1="916.5" y1="141" x2="916.5" y2="146" stroke="#888" stroke-width="1"/><line x1="923.5" y1="141" x2="923.5" y2="146" stroke="#888" stroke-width="1"/><line x1="930.5" y1="141" x2="930.5" y2="146" stroke="#888" stroke-width="1"/><line x1="937.5" y1="127" x2="937.5" y2="146" stroke="#777" stroke-width="1"/><text x="939.0" y="137" font-size="11">2000</text><line x1="944.5" y1="141" x2="944.5" y2="146" stroke="#888" stroke-width="1"/><line x1="951.5" y1="141" x2="951.5" y2="146" stroke="#888" stroke-width="1"/><line x1="958.5" y1="141" x2="958.5" y2="146" stroke="#888" stroke-width="1"/><line x1="965.5" y1="141" x2="965.5" y2="146" stroke="#888" stroke-width="1"/><line x1="972.5" y1="136" x2="972.5" y2="146" stroke="#888" stroke-width="1"/><line x1="979.5" y1="141" x2="979.5" y2="146" stroke="#888" stroke-width="1"/><line x1="986.5" y1="141" x2="986.5" y2="146" stroke="#888" stroke-width="1"/><line x1="993.5" y1="141" x2="993.5" y2="146" stroke="#888" stroke-width="1"/><line x1="1000.5" y1="141" x2="1000.5" y2="146" stroke="#888" stroke-width="1"/><line x1="1007.5" y1="127" x2="1007.5" y2="146" stroke="#777" stroke-width="1"/><text x="1009.0" y="137" font-size="11">2200</text><line x1="1014.5" y1="141" x2="1014.5" y2="146" stroke="#888" stroke-width="1"/><line x1="1021.5" y1="141" x2="1021.5" y2="146" stroke="#888" stroke-width="1"/><line x1="1028.5" y1="141" x2="1028.5" y2="146" stroke="#888" stroke-width="1"/><line x1="1035.5" y1="141" x2="1035.5" y2="146" stroke="#888" stroke-width="1"/><line x1="1042.5" y1="136" x2="1042.5" y2="146" stroke="#888" stroke-width="1"/><line x1="1049.5" y1="141" x2="1049.5" y2="146" stroke="#888" stroke-width="1"/><line x1="1056.5" y1="141" x2="1056.5" y2="146" stroke="#888" stroke-width="1"/><line x1="1063.5" y1="141" x2="1063.5" y2="146" stroke="#888" stroke-width="1"/><line x1="1070.5" y1="141" x2="1070.5" y2="146" stroke="#888" stroke-width="1"/><line x1="1077.5" y1="127" x2="1077.5" y2="146" stroke="#777" stroke-width="1"/><text x="1079.0" y="137" font-size="11">2400</text><line x1="1084.5" y1="141" x2="1084.5" y2="146" stroke="#888" stroke-width="1"/><line x1="1091.5" y1="141" x2="1091.5" y2="146" stroke="#888" stroke-width="1"/><line x1="1098.5" y1="141" x2="1098.5" y2="146" stroke="#888" stroke-width="1"/><line x1="1105.5" y1="141" x2="1105.5" y2="146" stroke="#888" stroke-width="1"/><line x1="1112.5" y1="136" x2="1112.5" y2="146" stroke="#888" stroke-width="1"/><line x1="1119.5" y1="141" x2="1119.5" y2="146" stroke="#888" stroke-width="1"/><line x1="1126.5" y1="141" x2="1126.5" y2="146" stroke="#888" stroke-width="1"/><line x1="1133.5" y1="141" x2="1133.5" y2="146" stroke="#888" stroke-width="1"/><line x1="1140.5" y1="141" x2="1140.5" y2="146" stroke="#888" stroke-width="1"/><line x1="1147.5" y1="127" x2="1147.5" y2="146" stroke="#777" stroke-width="1"/><text x="1149.0" y="137" font-size="11">2600</text><line x1="1154.5" y1="141" x2="1154.5" y2="146" stroke="#888" stroke-width="1"/><line x1="1161.5" y1="141" x2="1161.5" y2="146" stroke="#888" stroke-width="1"/><line x1="1168.5" y1="141" x2="1168.5" y2="146" stroke="#888" stroke-width="1"/><line x1="1175.5" y1="141" x2="1175.5" y2="146" stroke="#888" stroke-width="1"/><line x1="1182.5" y1="136" x2="1182.5" y2="146" stroke="#888" stroke-width="1"/><line x1="1189.5" y1="141" x2="1189.5" y2="146" stroke="#888" stroke-width="1"/><line x1="1196.5" y1="141" x2="1196.5" y2="146" stroke="#888" stroke-width="1"/><line x1="1203.5" y1="141" x2="1203.5" y2="146" stroke="#888" stroke-width="1"/><line x1="1210.5" y1="141" x2="1210.5" y2="146" stroke="#888" stroke-width="1"/><line x1="1217.5" y1="127" x2="1217.5" y2="146" stroke="#777" stroke-width="1"/><text x="1219.0" y="137" font-size="11">2800</text><line x1="1224.5" y1="141" x2="1224.5" y2="146" stroke="#888" stroke-width="1"/><line x1="1231.5" y1="141" x2="1231.5" y2="146" stroke="#888" stroke-width="1"/><line x1="1238.5" y1="141" x2="1238.5" y2="146" stroke="#888" stroke-width="1"/><line x1="1245.5" y1="141" x2="1245.5" y2="146" stroke="#888" stroke-width="1"/><line x1="1252.5" y1="136" x2="1252.5" y2="146" stroke="#888" stroke-width="1"/><line x1="1259.5" y1="141" x2="1259.5" y2="146" stroke="#888" stroke-width="1"/><line x1="1266.5" y1="141" x2="1266.5" y2="146" stroke="#888" stroke-width="1"/><line x1="1273.5" y1="141" x2="1273.5" y2="146" stroke="#888" stroke-width="1"/><line x1="1280.5" y1="141" x2="1280.5" y2="146" stroke="#888" stroke-width="1"/><line x1="1287.5" y1="127" x2="1287.5" y2="146" stroke="#777" stroke-width="1"/><text x="1289.0" y="137" font-size="11">3000</text><line x1="1294.5" y1="141" x2="1294.5" y2="146" stroke="#888" stroke-width="1"/><line x1="1301.5" y1="141" x2="1301.5" y2="146" stroke="#888" stroke-width="1"/><line x1="1308.5" y1="141" x2="1308.5" y2="146" stroke="#888" stroke-width="1"/><line x1="1315.5" y1="141" x2="1315.5" y2="146" stroke="#888" stroke-width="1"/><line x1="1322.5" y1="136" x2="1322.5" y2="146" stroke="#888" stroke-width="1"/><line x1="1329.5" y1="141" x2="1329.5" y2="146" stroke="#888" stroke-width="1"/><line x1="1336.5" y1="141" x2="1336.5" y2="146" stroke="#888" stroke-width="1"/><line x1="1343.5" y1="141" x2="1343.5" y2="146" stroke="#888" stroke-width="1"/><line x1="1350.5" y1="141" x2="1350.5" y2="146" stroke="#888" stroke-width="1"/><line x1="1357.5" y1="127" x2="1357.5" y2="146" stroke="#777" stroke-width="1"/><text x="1359.0" y="137" font-size="11">3200</text><line x1="1364.5" y1="141" x2="1364.5" y2="146" stroke="#888" stroke-width="1"/><line x1="1371.5" y1="141" x2="1371.5" y2="146" stroke="#888" stroke-width="1"/><line x1="1378.5" y1="141" x2="1378.5" y2="146" stroke="#888" stroke-width="1"/><line x1="1385.5" y1="141" x2="1385.5" y2="146" stroke="#888" stroke-width="1"/><line x1="1392.5" y1="136" x2="1392.5" y2="146" stroke="#888" stroke-width="1"/><line x1="1399.5" y1="141" x2="1399.5" y2="146" stroke="#888" stroke-width="1"/><line x1="1406.5" y1="141" x2="1406.5" y2="146" stroke="#888" stroke-width="1"/><line x1="1413.5" y1="141" x2="1413.5" y2="146" stroke="#888" stroke-width="1"/><line x1="1420.5" y1="141" x2="1420.5" y2="146" stroke="#888" stroke-width="1"/><line x1="1427.5" y1="127" x2="1427.5" y2="146" stroke="#777" stroke-width="1"/><text x="1429.0" y="137" font-size="11">3400</text><line x1="1434.5" y1="141" x2="1434.5" y2="146" stroke="#888" stroke-width="1"/><line x1="1441.5" y1="141" x2="1441.5" y2="146" stroke="#888" stroke-width="1"/><line x1="1448.5" y1="141" x2="1448.5" y2="146" stroke="#888" stroke-width="1"/><line x1="1455.5" y1="141" x2="1455.5" y2="146" stroke="#888" stroke-width="1"/><line x1="1462.5" y1="136" x2="1462.5" y2="146" stroke="#888" stroke-width="1"/><line x1="1469.5" y1="141" x2="1469.5" y2="146" stroke="#888" stroke-width="1"/><line x1="1476.5" y1="141" x2="1476.5" y2="146" stroke="#888" stroke-width="1"/><line x1="1483.5" y1="141" x2="1483.5" y2="146" stroke="#888" stroke-width="1"/><line x1="1490.5" y1="141" x2="1490.5" y2="146" stroke="#888" stroke-width="1"/><line x1="1497.5" y1="127" x2="1497.5" y2="146" stroke="#777" stroke-width="1"/><text x="1499.0" y="137" font-size="11">3600</text><line x1="1504.5" y1="141" x2="1504.5" y2="146" stroke="#888" stroke-width="1"/><line x1="1511.5" y1="141" x2="1511.5" y2="146" stroke="#888" stroke-width="1"/><line x1="1518.5" y1="141" x2="1518.5" y2="146" stroke="#888" stroke-width="1"/><line x1="1525.5" y1="141" x2="1525.5" y2="146" stroke="#888" stroke-width="1"/><line x1="1532.5" y1="136" x2="1532.5" y2="146" stroke="#888" stroke-width="1"/><line x1="1539.5" y1="141" x2="1539.5" y2="146" stroke="#888" stroke-width="1"/><line x1="1546.5" y1="141" x2="1546.5" y2="146" stroke="#888" stroke-width="1"/><line x1="1553.5" y1="141" x2="1553.5" y2="146" stroke="#888" stroke-width="1"/><line x1="1560.5" y1="141" x2="1560.5" y2="146" stroke="#888" stroke-width="1"/><line x1="1567.5" y1="127" x2="1567.5" y2="146" stroke="#777" stroke-width="1"/><text x="1569.0" y="137" font-size="11">3800</text><line x1="1574.5" y1="141" x2="1574.5" y2="146" stroke="#888" stroke-width="1"/><line x1="1581.5" y1="141" x2="1581.5" y2="146" stroke="#888" stroke-width="1"/><line x1="1588.5" y1="141" x2="1588.5" y2="146" stroke="#888" stroke-width="1"/><line x1="1595.5" y1="141" x2="1595.5" y2="146" stroke="#888" stroke-width="1"/><line x1="1602.5" y1="136" x2="1602.5" y2="146" stroke="#888" stroke-width="1"/><line x1="1609.5" y1="141" x2="1609.5" y2="146" stroke="#888" stroke-width="1"/><line x1="1616.5" y1="141" x2="1616.5" y2="146" stroke="#888" stroke-width="1"/><line x1="1623.5" y1="141" x2="1623.5" y2="146" stroke="#888" stroke-width="1"/><line x1="1630.5" y1="141" x2="1630.5" y2="146" stroke="#888" stroke-width="1"/><line x1="1637.5" y1="127" x2="1637.5" y2="146" stroke="#777" stroke-width="1"/><text x="1639.0" y="137" font-size="11">4000</text><line x1="1644.5" y1="141" x2="1644.5" y2="146" stroke="#888" stroke-width="1"/><line x1="1651.5" y1="141" x2="1651.5" y2="146" stroke="#888" stroke-width="1"/><line x1="1658.5" y1="141" x2="1658.5" y2="146" stroke="#888" stroke-width="1"/><line x1="1665.5" y1="141" x2="1665.5" y2="146" stroke="#888" stroke-width="1"/><line x1="1672.5" y1="136" x2="1672.5" y2="146" stroke="#888" stroke-width="1"/><line x1="1679.5" y1="141" x2="1679.5" y2="146" stroke="#888" stroke-width="1"/><line x1="1686.5" y1="141" x2="1686.5" y2="146" stroke="#888" stroke-width="1"/><line x1="1693.5" y1="141" x2="1693.5" y2="146" stroke="#888" stroke-width="1"/><line x1="227" y1="146.5" x2="234" y2="146.5" stroke="#888" stroke-width="1"/><line x1="227" y1="153.5" x2="234" y2="153.5" stroke="#888" stroke-width="1"/><line x1="227" y1="160.5" x2="234" y2="160.5" stroke="#888" stroke-width="1"/><line x1="227" y1="167.5" x2="234" y2="167.5" stroke="#888" stroke-width="1"/><line x1="222" y1="174.5" x2="234" y2="174.5" stroke="#888" stroke-width="1"/><line x1="227" y1="181.5" x2="234" y2="181.5" stroke="#888" stroke-width="1"/><line x1="227" y1="188.5" x2="234" y2="188.5" stroke="#888" stroke-width="1"/><line x1="227" y1="195.5" x2="234" y2="195.5" stroke="#888" stroke-width="1"/><line x1="227" y1="202.5" x2="234" y2="202.5" stroke="#888" stroke-width="1"/><line x1="216" y1="209.5" x2="234" y2="209.5" stroke="#777" stroke-width="1"/><text transform="translate(216,211.0) rotate(90)" font-size="11.5">0</text><line x1="227" y1="216.5" x2="234" y2="216.5" stroke="#888" stroke-width="1"/><line x1="227" y1="223.5" x2="234" y2="223.5" stroke="#888" stroke-width="1"/><line x1="227" y1="230.5" x2="234" y2="230.5" stroke="#888" stroke-width="1"/><line x1="227" y1="237.5" x2="234" y2="237.5" stroke="#888" stroke-width="1"/><line x1="222" y1="244.5" x2="234" y2="244.5" stroke="#888" stroke-width="1"/><line x1="227" y1="251.5" x2="234" y2="251.5" stroke="#888" stroke-width="1"/><line x1="227" y1="258.5" x2="234" y2="258.5" stroke="#888" stroke-width="1"/><line x1="227" y1="265.5" x2="234" y2="265.5" stroke="#888" stroke-width="1"/><line x1="227" y1="272.5" x2="234" y2="272.5" stroke="#888" stroke-width="1"/><line x1="216" y1="279.5" x2="234" y2="279.5" stroke="#777" stroke-width="1"/><text transform="translate(216,281.0) rotate(90)" font-size="11.5">200</text><line x1="227" y1="286.5" x2="234" y2="286.5" stroke="#888" stroke-width="1"/><line x1="227" y1="293.5" x2="234" y2="293.5" stroke="#888" stroke-width="1"/><line x1="227" y1="300.5" x2="234" y2="300.5" stroke="#888" stroke-width="1"/><line x1="227" y1="307.5" x2="234" y2="307.5" stroke="#888" stroke-width="1"/><line x1="222" y1="314.5" x2="234" y2="314.5" stroke="#888" stroke-width="1"/><line x1="227" y1="321.5" x2="234" y2="321.5" stroke="#888" stroke-width="1"/><line x1="227" y1="328.5" x2="234" y2="328.5" stroke="#888" stroke-width="1"/><line x1="227" y1="335.5" x2="234" y2="335.5" stroke="#888" stroke-width="1"/><line x1="227" y1="342.5" x2="234" y2="342.5" stroke="#888" stroke-width="1"/><line x1="216" y1="349.5" x2="234" y2="349.5" stroke="#777" stroke-width="1"/><text transform="translate(216,351.0) rotate(90)" font-size="11.5">400</text><line x1="227" y1="356.5" x2="234" y2="356.5" stroke="#888" stroke-width="1"/><line x1="227" y1="363.5" x2="234" y2="363.5" stroke="#888" stroke-width="1"/><line x1="227" y1="370.5" x2="234" y2="370.5" stroke="#888" stroke-width="1"/><line x1="227" y1="377.5" x2="234" y2="377.5" stroke="#888" stroke-width="1"/><line x1="222" y1="384.5" x2="234" y2="384.5" stroke="#888" stroke-width="1"/><line x1="227" y1="391.5" x2="234" y2="391.5" stroke="#888" stroke-width="1"/><line x1="227" y1="398.5" x2="234" y2="398.5" stroke="#888" stroke-width="1"/><line x1="227" y1="405.5" x2="234" y2="405.5" stroke="#888" stroke-width="1"/><line x1="227" y1="412.5" x2="234" y2="412.5" stroke="#888" stroke-width="1"/><line x1="216" y1="419.5" x2="234" y2="419.5" stroke="#777" stroke-width="1"/><text transform="translate(216,421.0) rotate(90)" font-size="11.5">600</text><line x1="227" y1="426.5" x2="234" y2="426.5" stroke="#888" stroke-width="1"/><line x1="227" y1="433.5" x2="234" y2="433.5" stroke="#888" stroke-width="1"/><line x1="227" y1="440.5" x2="234" y2="440.5" stroke="#888" stroke-width="1"/><line x1="227" y1="447.5" x2="234" y2="447.5" stroke="#888" stroke-width="1"/><line x1="222" y1="454.5" x2="234" y2="454.5" stroke="#888" stroke-width="1"/><line x1="227" y1="461.5" x2="234" y2="461.5" stroke="#888" stroke-width="1"/><line x1="227" y1="468.5" x2="234" y2="468.5" stroke="#888" stroke-width="1"/><line x1="227" y1="475.5" x2="234" y2="475.5" stroke="#888" stroke-width="1"/><line x1="227" y1="482.5" x2="234" y2="482.5" stroke="#888" stroke-width="1"/><line x1="216" y1="489.5" x2="234" y2="489.5" stroke="#777" stroke-width="1"/><text transform="translate(216,491.0) rotate(90)" font-size="11.5">800</text><line x1="227" y1="496.5" x2="234" y2="496.5" stroke="#888" stroke-width="1"/><line x1="227" y1="503.5" x2="234" y2="503.5" stroke="#888" stroke-width="1"/><line x1="227" y1="510.5" x2="234" y2="510.5" stroke="#888" stroke-width="1"/><line x1="227" y1="517.5" x2="234" y2="517.5" stroke="#888" stroke-width="1"/><line x1="222" y1="524.5" x2="234" y2="524.5" stroke="#888" stroke-width="1"/><line x1="227" y1="531.5" x2="234" y2="531.5" stroke="#888" stroke-width="1"/><line x1="227" y1="538.5" x2="234" y2="538.5" stroke="#888" stroke-width="1"/><line x1="227" y1="545.5" x2="234" y2="545.5" stroke="#888" stroke-width="1"/><line x1="227" y1="552.5" x2="234" y2="552.5" stroke="#888" stroke-width="1"/><line x1="216" y1="559.5" x2="234" y2="559.5" stroke="#777" stroke-width="1"/><text transform="translate(216,561.0) rotate(90)" font-size="11.5">1000</text><line x1="227" y1="566.5" x2="234" y2="566.5" stroke="#888" stroke-width="1"/><line x1="227" y1="573.5" x2="234" y2="573.5" stroke="#888" stroke-width="1"/><line x1="227" y1="580.5" x2="234" y2="580.5" stroke="#888" stroke-width="1"/><line x1="227" y1="587.5" x2="234" y2="587.5" stroke="#888" stroke-width="1"/><line x1="222" y1="594.5" x2="234" y2="594.5" stroke="#888" stroke-width="1"/><line x1="227" y1="601.5" x2="234" y2="601.5" stroke="#888" stroke-width="1"/><line x1="227" y1="608.5" x2="234" y2="608.5" stroke="#888" stroke-width="1"/><line x1="227" y1="615.5" x2="234" y2="615.5" stroke="#888" stroke-width="1"/><line x1="227" y1="622.5" x2="234" y2="622.5" stroke="#888" stroke-width="1"/><line x1="216" y1="629.5" x2="234" y2="629.5" stroke="#777" stroke-width="1"/><text transform="translate(216,631.0) rotate(90)" font-size="11.5">1200</text><line x1="227" y1="636.5" x2="234" y2="636.5" stroke="#888" stroke-width="1"/><line x1="227" y1="643.5" x2="234" y2="643.5" stroke="#888" stroke-width="1"/><line x1="227" y1="650.5" x2="234" y2="650.5" stroke="#888" stroke-width="1"/><line x1="227" y1="657.5" x2="234" y2="657.5" stroke="#888" stroke-width="1"/><line x1="222" y1="664.5" x2="234" y2="664.5" stroke="#888" stroke-width="1"/><line x1="227" y1="671.5" x2="234" y2="671.5" stroke="#888" stroke-width="1"/><line x1="227" y1="678.5" x2="234" y2="678.5" stroke="#888" stroke-width="1"/><line x1="227" y1="685.5" x2="234" y2="685.5" stroke="#888" stroke-width="1"/><line x1="227" y1="692.5" x2="234" y2="692.5" stroke="#888" stroke-width="1"/><line x1="216" y1="699.5" x2="234" y2="699.5" stroke="#777" stroke-width="1"/><text transform="translate(216,701.0) rotate(90)" font-size="11.5">1400</text><line x1="227" y1="706.5" x2="234" y2="706.5" stroke="#888" stroke-width="1"/><line x1="227" y1="713.5" x2="234" y2="713.5" stroke="#888" stroke-width="1"/><line x1="227" y1="720.5" x2="234" y2="720.5" stroke="#888" stroke-width="1"/><line x1="227" y1="727.5" x2="234" y2="727.5" stroke="#888" stroke-width="1"/><line x1="222" y1="734.5" x2="234" y2="734.5" stroke="#888" stroke-width="1"/><line x1="227" y1="741.5" x2="234" y2="741.5" stroke="#888" stroke-width="1"/><line x1="227" y1="748.5" x2="234" y2="748.5" stroke="#888" stroke-width="1"/><line x1="227" y1="755.5" x2="234" y2="755.5" stroke="#888" stroke-width="1"/><line x1="227" y1="762.5" x2="234" y2="762.5" stroke="#888" stroke-width="1"/><line x1="216" y1="769.5" x2="234" y2="769.5" stroke="#777" stroke-width="1"/><text transform="translate(216,771.0) rotate(90)" font-size="11.5">1600</text><line x1="227" y1="776.5" x2="234" y2="776.5" stroke="#888" stroke-width="1"/><line x1="227" y1="783.5" x2="234" y2="783.5" stroke="#888" stroke-width="1"/><line x1="227" y1="790.5" x2="234" y2="790.5" stroke="#888" stroke-width="1"/><line x1="227" y1="797.5" x2="234" y2="797.5" stroke="#888" stroke-width="1"/><line x1="222" y1="804.5" x2="234" y2="804.5" stroke="#888" stroke-width="1"/><line x1="227" y1="811.5" x2="234" y2="811.5" stroke="#888" stroke-width="1"/><line x1="227" y1="818.5" x2="234" y2="818.5" stroke="#888" stroke-width="1"/><line x1="227" y1="825.5" x2="234" y2="825.5" stroke="#888" stroke-width="1"/><line x1="227" y1="832.5" x2="234" y2="832.5" stroke="#888" stroke-width="1"/><line x1="216" y1="839.5" x2="234" y2="839.5" stroke="#777" stroke-width="1"/><text transform="translate(216,841.0) rotate(90)" font-size="11.5">1800</text><line x1="227" y1="846.5" x2="234" y2="846.5" stroke="#888" stroke-width="1"/><line x1="227" y1="853.5" x2="234" y2="853.5" stroke="#888" stroke-width="1"/><line x1="227" y1="860.5" x2="234" y2="860.5" stroke="#888" stroke-width="1"/><line x1="227" y1="867.5" x2="234" y2="867.5" stroke="#888" stroke-width="1"/><line x1="222" y1="874.5" x2="234" y2="874.5" stroke="#888" stroke-width="1"/><line x1="227" y1="881.5" x2="234" y2="881.5" stroke="#888" stroke-width="1"/><line x1="227" y1="888.5" x2="234" y2="888.5" stroke="#888" stroke-width="1"/><line x1="227" y1="895.5" x2="234" y2="895.5" stroke="#888" stroke-width="1"/><line x1="227" y1="902.5" x2="234" y2="902.5" stroke="#888" stroke-width="1"/><line x1="216" y1="909.5" x2="234" y2="909.5" stroke="#777" stroke-width="1"/><text transform="translate(216,911.0) rotate(90)" font-size="11.5">2000</text><line x1="227" y1="916.5" x2="234" y2="916.5" stroke="#888" stroke-width="1"/><line x1="227" y1="923.5" x2="234" y2="923.5" stroke="#888" stroke-width="1"/><line x1="227" y1="930.5" x2="234" y2="930.5" stroke="#888" stroke-width="1"/><line x1="227" y1="937.5" x2="234" y2="937.5" stroke="#888" stroke-width="1"/><line x1="222" y1="944.5" x2="234" y2="944.5" stroke="#888" stroke-width="1"/><line x1="227" y1="951.5" x2="234" y2="951.5" stroke="#888" stroke-width="1"/><line x1="227" y1="958.5" x2="234" y2="958.5" stroke="#888" stroke-width="1"/><line x1="227" y1="965.5" x2="234" y2="965.5" stroke="#888" stroke-width="1"/><line x1="227" y1="972.5" x2="234" y2="972.5" stroke="#888" stroke-width="1"/><line x1="216" y1="979.5" x2="234" y2="979.5" stroke="#777" stroke-width="1"/><text transform="translate(216,981.0) rotate(90)" font-size="11.5">2200</text><line x1="227" y1="986.5" x2="234" y2="986.5" stroke="#888" stroke-width="1"/></svg><svg class="a" style="left:234px;top:146px" width="1465" height="844" viewBox="234 146 1465 844" font-family='"Liberation Sans", sans-serif'><rect x="234" y="146" width="1465" height="844" fill="#000"/><rect x="235" y="206" width="1440" height="687" fill="#ff0000"/><g fill="none" stroke="#000080" stroke-linejoin="miter" stroke-linecap="butt"><polyline points="511,282 524,282 536,294 536,482 520,498 509,498" stroke-width="15.0"/><polyline points="544.5,258 544.5,280 536,290" stroke-width="15.0"/><path d="M586 295 L601 280 L717 280 L708 289 L611 289 L595 305 L595 540 L586 540 Z" fill="#000080" stroke="none"/><path d="M618 229 H962 V242 H618 Z" fill="#000080" stroke="none"/><polyline points="685,258 685,268 675,278.5 600,278.5 583.6,295 583.6,555" stroke-width="13"/><polyline points="720,258 720,280 708,292 611,292 597.6,306 597.6,534" stroke-width="13.100000000000001"/><polyline points="614.7,258 614.7,227 964,227 976,239 976,430" stroke-width="12.1"/><polyline points="655,238.5 958,238.5 962,243 962,430" stroke-width="8.5"/><path d="M964 242 H971 V430 H964 Z" fill="#000080" stroke="none"/><polyline points="828.6,300 828.6,319 784.5,363 784.5,405" stroke-width="12"/><polyline points="897.8,289 880,289 809,360 809,405" stroke-width="12"/><polyline points="1021,300 1021,356 1000,377 1000,440" stroke-width="11"/><polyline points="1090,289 1568,289 1580,301 1580,420 1566,434 1566,444" stroke-width="14.0"/><polyline points="489.5,427 489.5,466 474,481 428,481 414,495 414,590 431,607 541,607 558.5,590 558.5,445" stroke-width="22.0"/><polyline points="440,513 457.4,513 457.4,540 469,551.8 504,551.8 515.4,540 515.4,505 520,500" stroke-width="15.5"/><polyline points="463.6,863.5 390,863.5" stroke-width="11"/><polyline points="463.6,863.5 485.7,842" stroke-width="10"/><path d="M470 839 H500 L512 852 H574 L590 836 V818 H597 V849 L583 862 H485 L470 847 Z" fill="#000080" stroke="none"/><polyline points="467.5,839 467.5,849.8 483.4,865 584.2,865 599.4,849.8 599.4,821" stroke-width="13.0"/><polyline points="501,839 510.3,848.6 572.5,848.6 586.5,834.5 586.5,811" stroke-width="13.0"/><path d="M261 676 V742 Q261 785 304 785 H350" stroke-width="24" stroke-linejoin="round"/><polyline points="737,423 737,432 748,440 768.6,440" stroke-width="9.2"/><polyline points="826,423 827.8,443" stroke-width="9.2"/><polyline points="784.5,423 784.5,440 770,458.5 767,458.5" stroke-width="9.2"/><polyline points="809,423 809,445 790,476.4 767,476.4" stroke-width="9.2"/><polyline points="767,491.5 778,491.5 815,454.5 840,454.5" stroke-width="10.1"/><polyline points="700,505 776,505 817,464 840,464" stroke-width="10.1"/><polyline points="772.2,530.8 825,478 840,473.5" stroke-width="10.1"/><polyline points="789.6,551.3 800,541 800,515 830,485 840,483" stroke-width="10.1"/><polyline points="810.6,548.6 814,540 814,522 838,498 840,492.9" stroke-width="10.1"/><polyline points="825,562 826,540 846,518 846,510" stroke-width="10.1"/><polyline points="838.4,548 838.4,530 842,528" stroke-width="10.1"/><polyline points="767,458.5 774,458.5 784.5,446 784.5,423" stroke-width="10.1"/><polyline points="767,475.5 778,475.5 809,446 809,423" stroke-width="10.1"/><polyline points="660,441.6 643,441.6 622,462 622,576" stroke-width="11"/><polyline points="660,458.5 650,458.5 636,472 636,538" stroke-width="10.1"/><polyline points="660,475.5 655,475.5 649,482 649,522 675,548 693,548" stroke-width="10.1"/><polyline points="660,491.5 662,491.5 662,512 690,540" stroke-width="9.2"/><polyline points="597,534 606,526 606,470 640,436 660,436" stroke-width="9.2"/><polyline points="832,454.5 851,454.5" stroke-width="10.0"/><polyline points="911,454.5 930,454.5" stroke-width="10.0"/><polyline points="832,464 851,464" stroke-width="10.0"/><polyline points="911,464 930,464" stroke-width="10.0"/><polyline points="832,473.5 851,473.5" stroke-width="10.0"/><polyline points="911,473.5 930,473.5" stroke-width="10.0"/><polyline points="832,483 851,483" stroke-width="10.0"/><polyline points="911,483 930,483" stroke-width="10.0"/><polyline points="832,492.9 851,492.9" stroke-width="10.0"/><polyline points="911,492.9 930,492.9" stroke-width="10.0"/><polyline points="832,501 851,501" stroke-width="10.0"/><polyline points="911,501 930,501" stroke-width="10.0"/><polyline points="832,510.7 851,510.7" stroke-width="10.0"/><polyline points="911,510.7 930,510.7" stroke-width="10.0"/><polyline points="832,519 851,519" stroke-width="10.0"/><polyline points="911,519 930,519" stroke-width="10.0"/><polyline points="832,528 851,528" stroke-width="10.0"/><polyline points="911,528 930,528" stroke-width="10.0"/><path d="M911 445 H929 V540 H911 Z" fill="#000080" stroke="none"/><path d="M886 492 H910 V538 H886 Z" fill="#000080" stroke="none"/><path d="M852 508 H872 V538 H852 Z" fill="#000080" stroke="none"/><polyline points="910,481 891.5,481 879.6,491 879.6,538" stroke-width="10.0"/><polyline points="851,507 862,518 862,538" stroke-width="10.0"/><path d="M929 508 H1000 V540 H929 Z" fill="#000080" stroke="none"/><polyline points="962,430 962,463 950,474.5 929,474.5" stroke-width="11"/><polyline points="976,430 976,467 957,483 929,483" stroke-width="11"/><polyline points="929,492.9 975,492.9" stroke-width="10.1"/><polyline points="929,501.5 975,501.5" stroke-width="10.1"/><polyline points="929,510.7 965,510.7 976,521 1001,546 1001,715" stroke-width="10.1"/><polyline points="929,520.5 938,520.5 950.7,533.8 960,533.8 985,531 1015,558 1015,672 1030,687 1030,715" stroke-width="10.1"/><polyline points="1004.6,521 1029,548 1029,660 1058,689 1058,715" stroke-width="10.1"/><polyline points="1014,521 1041,548 1041,655 1073,687 1085,687" stroke-width="10.1"/><polyline points="990,440 1031.5,480" stroke-width="9.2"/><polyline points="1005,430 1041,447" stroke-width="9.2"/><polyline points="742,563 758,562" stroke-width="10.0"/><polyline points="742,577 858,577 880,551" stroke-width="10.1"/><polyline points="693,576 690,580 690,604" stroke-width="9.2"/><polyline points="693,550 680,550 673.9,560 673.9,597" stroke-width="9.2"/><polyline points="824.7,709 824.7,829 797.8,856" stroke-width="9.2"/><polyline points="839.5,684 839.5,829 870,860.7 883,860.7" stroke-width="9.2"/><polyline points="708,860.7 797.8,860.7" stroke-width="9.0"/><polyline points="883,860.7 972.7,860.7" stroke-width="9.0"/><polyline points="1381.6,859.8 1471.7,859.8" stroke-width="9.0"/><polyline points="583,555 583,592 570,594 565,594" stroke-width="8.5"/><polyline points="597.3,534 597.3,597 610.5,597" stroke-width="8.5"/><polyline points="565.3,628 580,614 610.5,614" stroke-width="8.5"/><polyline points="621.6,576 621.6,673 593,702 575,702" stroke-width="9.2"/><polyline points="636,538 636,704 603,736 575,736" stroke-width="9.2"/><polyline points="649.7,573 649.7,712 611,751" stroke-width="9.2"/><polyline points="734.5,580 734.5,735 665,805 632,805 615,789 575,789" stroke-width="9.2"/><polyline points="649.4,734 614.5,770 575,770" stroke-width="9.2"/><polyline points="611,751 575,751" stroke-width="8.5"/><polyline points="575,762 600,762" stroke-width="8.5"/><polyline points="853,594 853,709" stroke-width="9.2"/><polyline points="1381.6,859.8 1352.5,834 1352.5,772 1340,759.5 1040,759.5 1002.6,722" stroke-width="10.1"/><polyline points="1113,722 1131,740 1596,740 1631,705 1631,575" stroke-width="14.9"/><polyline points="1113,722 1113,690" stroke-width="9.0"/><polyline points="1141,722 1141,690" stroke-width="9.0"/><polyline points="1168,722 1168,690" stroke-width="9.0"/><polyline points="1196,722 1196,675 1180,665 1165,665" stroke-width="9.0"/><polyline points="1401.6,506 1449.5,458 1449.5,448 1482,448" stroke-width="14"/><polyline points="1510,448 1542,448" stroke-width="14"/><polyline points="1572,446 1605,446" stroke-width="14"/><polyline points="1437,530.8 1451,517 1482,517" stroke-width="14"/><polyline points="1510,517 1542,516" stroke-width="14"/><polyline points="1572,514 1605,514" stroke-width="14"/></g><g fill="none" stroke="#ff0000" stroke-linejoin="miter" stroke-linecap="butt"><polyline points="511,282 524,282 536,294 536,482 520,498 509,498" stroke-width="8"/><polyline points="544.5,258 544.5,280 536,290" stroke-width="8"/><polyline points="685,258 685,268 675,278.5 600,278.5 583.6,295 583.6,555" stroke-width="5"/><polyline points="720,258 720,280 708,292 611,292 597.6,306 597.6,534" stroke-width="4.7"/><polyline points="614.7,258 614.7,227 964,227 976,239 976,430" stroke-width="6.5"/><polyline points="655,238.5 958,238.5 962,243 962,430" stroke-width="3.5"/><polyline points="828.6,300 828.6,319 784.5,363 784.5,405" stroke-width="6"/><polyline points="897.8,289 880,289 809,360 809,405" stroke-width="6"/><polyline points="1021,300 1021,356 1000,377 1000,440" stroke-width="5"/><polyline points="1090,289 1568,289 1580,301 1580,420 1566,434 1566,444" stroke-width="7"/><polyline points="489.5,427 489.5,466 474,481 428,481 414,495 414,590 431,607 541,607 558.5,590 558.5,445" stroke-width="15"/><polyline points="440,513 457.4,513 457.4,540 469,551.8 504,551.8 515.4,540 515.4,505 520,500" stroke-width="9.5"/><polyline points="463.6,863.5 390,863.5" stroke-width="5"/><polyline points="463.6,863.5 485.7,842" stroke-width="4"/><polyline points="467.5,839 467.5,849.8 483.4,865 584.2,865 599.4,849.8 599.4,821" stroke-width="6"/><polyline points="501,839 510.3,848.6 572.5,848.6 586.5,834.5 586.5,811" stroke-width="6"/><path d="M261 676 V742 Q261 785 304 785 H350" stroke-width="19" stroke-linejoin="round"/><polyline points="737,423 737,432 748,440 768.6,440" stroke-width="4"/><polyline points="826,423 827.8,443" stroke-width="4"/><polyline points="784.5,423 784.5,440 770,458.5 767,458.5" stroke-width="4"/><polyline points="809,423 809,445 790,476.4 767,476.4" stroke-width="4"/><polyline points="767,491.5 778,491.5 815,454.5 840,454.5" stroke-width="4.5"/><polyline points="700,505 776,505 817,464 840,464" stroke-width="4.5"/><polyline points="772.2,530.8 825,478 840,473.5" stroke-width="4.5"/><polyline points="789.6,551.3 800,541 800,515 830,485 840,483" stroke-width="4.5"/><polyline points="810.6,548.6 814,540 814,522 838,498 840,492.9" stroke-width="4.5"/><polyline points="825,562 826,540 846,518 846,510" stroke-width="4.5"/><polyline points="838.4,548 838.4,530 842,528" stroke-width="4.5"/><polyline points="767,458.5 774,458.5 784.5,446 784.5,423" stroke-width="4.5"/><polyline points="767,475.5 778,475.5 809,446 809,423" stroke-width="4.5"/><polyline points="660,441.6 643,441.6 622,462 622,576" stroke-width="5"/><polyline points="660,458.5 650,458.5 636,472 636,538" stroke-width="4.5"/><polyline points="660,475.5 655,475.5 649,482 649,522 675,548 693,548" stroke-width="4.5"/><polyline points="660,491.5 662,491.5 662,512 690,540" stroke-width="4"/><polyline points="597,534 606,526 606,470 640,436 660,436" stroke-width="4"/><polyline points="832,454.5 851,454.5" stroke-width="5"/><polyline points="911,454.5 930,454.5" stroke-width="5"/><polyline points="832,464 851,464" stroke-width="5"/><polyline points="911,464 930,464" stroke-width="5"/><polyline points="832,473.5 851,473.5" stroke-width="5"/><polyline points="911,473.5 930,473.5" stroke-width="5"/><polyline points="832,483 851,483" stroke-width="5"/><polyline points="911,483 930,483" stroke-width="5"/><polyline points="832,492.9 851,492.9" stroke-width="5"/><polyline points="911,492.9 930,492.9" stroke-width="5"/><polyline points="832,501 851,501" stroke-width="5"/><polyline points="911,501 930,501" stroke-width="5"/><polyline points="832,510.7 851,510.7" stroke-width="5"/><polyline points="911,510.7 930,510.7" stroke-width="5"/><polyline points="832,519 851,519" stroke-width="5"/><polyline points="911,519 930,519" stroke-width="5"/><polyline points="832,528 851,528" stroke-width="5"/><polyline points="911,528 930,528" stroke-width="5"/><polyline points="910,481 891.5,481 879.6,491 879.6,538" stroke-width="5"/><polyline points="851,507 862,518 862,538" stroke-width="5"/><polyline points="962,430 962,463 950,474.5 929,474.5" stroke-width="5"/><polyline points="976,430 976,467 957,483 929,483" stroke-width="5"/><polyline points="929,492.9 975,492.9" stroke-width="4.5"/><polyline points="929,501.5 975,501.5" stroke-width="4.5"/><polyline points="929,510.7 965,510.7 976,521 1001,546 1001,715" stroke-width="4.5"/><polyline points="929,520.5 938,520.5 950.7,533.8 960,533.8 985,531 1015,558 1015,672 1030,687 1030,715" stroke-width="4.5"/><polyline points="1004.6,521 1029,548 1029,660 1058,689 1058,715" stroke-width="4.5"/><polyline points="1014,521 1041,548 1041,655 1073,687 1085,687" stroke-width="4.5"/><polyline points="990,440 1031.5,480" stroke-width="4"/><polyline points="1005,430 1041,447" stroke-width="4"/><polyline points="742,563 758,562" stroke-width="5"/><polyline points="742,577 858,577 880,551" stroke-width="4.5"/><polyline points="693,576 690,580 690,604" stroke-width="4"/><polyline points="693,550 680,550 673.9,560 673.9,597" stroke-width="4"/><polyline points="824.7,709 824.7,829 797.8,856" stroke-width="4"/><polyline points="839.5,684 839.5,829 870,860.7 883,860.7" stroke-width="4"/><polyline points="708,860.7 797.8,860.7" stroke-width="4"/><polyline points="883,860.7 972.7,860.7" stroke-width="4"/><polyline points="1381.6,859.8 1471.7,859.8" stroke-width="4"/><polyline points="583,555 583,592 570,594 565,594" stroke-width="3.5"/><polyline points="597.3,534 597.3,597 610.5,597" stroke-width="3.5"/><polyline points="565.3,628 580,614 610.5,614" stroke-width="3.5"/><polyline points="621.6,576 621.6,673 593,702 575,702" stroke-width="4"/><polyline points="636,538 636,704 603,736 575,736" stroke-width="4"/><polyline points="649.7,573 649.7,712 611,751" stroke-width="4"/><polyline points="734.5,580 734.5,735 665,805 632,805 615,789 575,789" stroke-width="4"/><polyline points="649.4,734 614.5,770 575,770" stroke-width="4"/><polyline points="611,751 575,751" stroke-width="3.5"/><polyline points="575,762 600,762" stroke-width="3.5"/><polyline points="853,594 853,709" stroke-width="4"/><polyline points="1381.6,859.8 1352.5,834 1352.5,772 1340,759.5 1040,759.5 1002.6,722" stroke-width="4.5"/><polyline points="1113,722 1131,740 1596,740 1631,705 1631,575" stroke-width="8.5"/><polyline points="1113,722 1113,690" stroke-width="4"/><polyline points="1141,722 1141,690" stroke-width="4"/><polyline points="1168,722 1168,690" stroke-width="4"/><polyline points="1196,722 1196,675 1180,665 1165,665" stroke-width="4"/><polyline points="1401.6,506 1449.5,458 1449.5,448 1482,448" stroke-width="8"/><polyline points="1510,448 1542,448" stroke-width="8"/><polyline points="1572,446 1605,446" stroke-width="8"/><polyline points="1437,530.8 1451,517 1482,517" stroke-width="8"/><polyline points="1510,517 1542,516" stroke-width="8"/><polyline points="1572,514 1605,514" stroke-width="8"/></g><path d="M336 256 H327.5 V266 M327.5 284 V294 H336 M350 256 H357 M350 294 H357 M357 256 V294" fill="none" stroke="#000080" stroke-width="2.8"/><path d="M481 256 H508 Q511 256 511 259 V291 Q511 294 508 294 H481" fill="none" stroke="#000080" stroke-width="2.8"/><path d="M336 342 H327.5 V352 M327.5 370 V380 H336 M350 342 H357 M350 380 H357 M357 342 V380" fill="none" stroke="#000080" stroke-width="2.8"/><path d="M481 342 H508 Q511 342 511 345 V377 Q511 380 508 380 H481" fill="none" stroke="#000080" stroke-width="2.8"/><circle cx="544.5" cy="258" r="15" fill="#000"/><circle cx="544.5" cy="258" r="12.9" fill="#6b6b6b"/><circle cx="544.5" cy="258" r="7.3" fill="#000"/><circle cx="579.6" cy="258" r="15" fill="#000"/><circle cx="579.6" cy="258" r="12.9" fill="#6b6b6b"/><circle cx="579.6" cy="258" r="7.3" fill="#000"/><circle cx="614.7" cy="258" r="15" fill="#000"/><circle cx="614.7" cy="258" r="12.9" fill="#6b6b6b"/><circle cx="614.7" cy="258" r="7.3" fill="#000"/><circle cx="649.8" cy="258" r="15" fill="#000"/><circle cx="649.8" cy="258" r="12.9" fill="#6b6b6b"/><circle cx="649.8" cy="258" r="7.3" fill="#000"/><circle cx="684.9" cy="258" r="15" fill="#000"/><circle cx="684.9" cy="258" r="12.9" fill="#6b6b6b"/><circle cx="684.9" cy="258" r="7.3" fill="#000"/><circle cx="720.0" cy="258" r="15" fill="#000"/><circle cx="720.0" cy="258" r="12.9" fill="#6b6b6b"/><circle cx="720.0" cy="258" r="7.3" fill="#000"/><rect x="1188" y="283" width="344" height="3.6" fill="#000"/><rect x="809.1" y="269.5" width="39.0" height="39.0" rx="3" fill="#000"/><rect x="811.6" y="272.0" width="34" height="34" fill="#6b6b6b"/><circle cx="828.6" cy="289" r="9.3" fill="#000"/><circle cx="897.8" cy="289" r="17.5" fill="#000"/><circle cx="897.8" cy="289" r="14.5" fill="#6b6b6b"/><circle cx="897.8" cy="289" r="9.5" fill="#000"/><rect x="1001.5" y="269.5" width="39.0" height="39.0" rx="3" fill="#000"/><rect x="1004.0" y="272.0" width="34" height="34" fill="#6b6b6b"/><circle cx="1021" cy="289" r="9.3" fill="#000"/><circle cx="1090" cy="289" r="17.5" fill="#000"/><circle cx="1090" cy="289" r="14.5" fill="#6b6b6b"/><circle cx="1090" cy="289" r="9.5" fill="#000"/><circle cx="289" cy="261" r="31" fill="#000"/><circle cx="289" cy="261" r="27.7" fill="#6b6b6b"/><circle cx="289" cy="261" r="22.5" fill="#000"/><circle cx="1619" cy="261" r="31" fill="#000"/><circle cx="1619" cy="261" r="27.7" fill="#6b6b6b"/><circle cx="1619" cy="261" r="22.5" fill="#000"/><circle cx="289" cy="846" r="31" fill="#000"/><circle cx="289" cy="846" r="27.7" fill="#6b6b6b"/><circle cx="289" cy="846" r="22.5" fill="#000"/><circle cx="1619" cy="846" r="31" fill="#000"/><circle cx="1619" cy="846" r="27.7" fill="#6b6b6b"/><circle cx="1619" cy="846" r="22.5" fill="#000"/><circle cx="650" cy="319" r="20.5" fill="#000"/><circle cx="650" cy="319" r="18.2" fill="#6b6b6b"/><circle cx="650" cy="319" r="15.8" fill="#000"/><circle cx="1548.5" cy="319" r="20.5" fill="#000"/><circle cx="1548.5" cy="319" r="18.2" fill="#6b6b6b"/><circle cx="1548.5" cy="319" r="15.8" fill="#000"/><circle cx="650" cy="774" r="20.5" fill="#000"/><circle cx="650" cy="774" r="18.2" fill="#6b6b6b"/><circle cx="650" cy="774" r="15.8" fill="#000"/><circle cx="1548.5" cy="775" r="20.5" fill="#000"/><circle cx="1548.5" cy="775" r="18.2" fill="#6b6b6b"/><circle cx="1548.5" cy="775" r="15.8" fill="#000"/><path d="M238 490 H322 V640 L333 650 V678 H238 Z" fill="#000"/><rect x="236" y="483" width="3" height="197" fill="#800080"/><rect x="247" y="532" width="30" height="14" fill="#ff0000"/><rect x="248" y="640" width="27.5" height="17" fill="#ff0000"/><rect x="253" y="640" width="18" height="40" fill="#ff0000"/><circle cx="251" cy="479.5" r="5.3" fill="#6b6b6b"/><circle cx="251" cy="479.5" r="2.6" fill="#000"/><circle cx="268" cy="479.5" r="5.3" fill="#6b6b6b"/><circle cx="268" cy="479.5" r="2.6" fill="#000"/><circle cx="287" cy="479.5" r="5.3" fill="#6b6b6b"/><circle cx="287" cy="479.5" r="2.6" fill="#000"/><circle cx="306.6" cy="479.5" r="5.3" fill="#6b6b6b"/><circle cx="306.6" cy="479.5" r="2.6" fill="#000"/><circle cx="324.6" cy="479.5" r="5.3" fill="#6b6b6b"/><circle cx="324.6" cy="479.5" r="2.6" fill="#000"/><circle cx="333.4" cy="490" r="5.3" fill="#6b6b6b"/><circle cx="333.4" cy="490" r="2.6" fill="#000"/><circle cx="333.4" cy="508" r="5.3" fill="#6b6b6b"/><circle cx="333.4" cy="508" r="2.6" fill="#000"/><circle cx="333.4" cy="525" r="5.3" fill="#6b6b6b"/><circle cx="333.4" cy="525" r="2.6" fill="#000"/><circle cx="333.4" cy="543" r="5.3" fill="#6b6b6b"/><circle cx="333.4" cy="543" r="2.6" fill="#000"/><circle cx="333.4" cy="560" r="5.3" fill="#6b6b6b"/><circle cx="333.4" cy="560" r="2.6" fill="#000"/><circle cx="333.4" cy="578" r="5.3" fill="#6b6b6b"/><circle cx="333.4" cy="578" r="2.6" fill="#000"/><circle cx="333.4" cy="595" r="5.3" fill="#6b6b6b"/><circle cx="333.4" cy="595" r="2.6" fill="#000"/><circle cx="333.4" cy="611" r="5.3" fill="#6b6b6b"/><circle cx="333.4" cy="611" r="2.6" fill="#000"/><circle cx="333.4" cy="628.6" r="5.3" fill="#6b6b6b"/><circle cx="333.4" cy="628.6" r="2.6" fill="#000"/><circle cx="333.4" cy="646" r="5.3" fill="#6b6b6b"/><circle cx="333.4" cy="646" r="2.6" fill="#000"/><circle cx="333.4" cy="662" r="5.3" fill="#6b6b6b"/><circle cx="333.4" cy="662" r="2.6" fill="#000"/><circle cx="333.4" cy="678" r="5.3" fill="#6b6b6b"/><circle cx="333.4" cy="678" r="2.6" fill="#000"/><rect x="355" y="455" width="35" height="54" fill="none" stroke="#000080" stroke-width="2.8"/><rect x="441" y="439" width="35" height="21" fill="none" stroke="#000080" stroke-width="2.6" stroke-dasharray="6 4"/><rect x="482.6" y="425.4" width="15" height="19.30000000000001" fill="#ff0000" stroke="#000080" stroke-width="2.6"/><rect x="507.9" y="425.4" width="15.8" height="19.30000000000001" fill="none" stroke="#000080" stroke-width="2.6" stroke-dasharray="6 4"/><rect x="482.6" y="456.6" width="15" height="22.399999999999977" fill="#ff0000" stroke="#000080" stroke-width="2.6"/><rect x="507.9" y="456.6" width="15.8" height="22.399999999999977" fill="none" stroke="#000080" stroke-width="2.6" stroke-dasharray="6 4"/><rect x="482.6" y="484" width="15" height="18.69999999999999" fill="#ff0000" stroke="#000080" stroke-width="2.6" stroke-dasharray="6 4"/><rect x="507.9" y="484" width="15.8" height="18.69999999999999" fill="none" stroke="#000080" stroke-width="2.6"/><rect x="482.6" y="511.7" width="15" height="22.30000000000001" fill="#ff0000" stroke="#000080" stroke-width="2.6" stroke-dasharray="6 4"/><rect x="507.9" y="511.7" width="15.8" height="22.30000000000001" fill="none" stroke="#000080" stroke-width="2.6"/><circle cx="565" cy="440" r="7.8" fill="#000"/><circle cx="565" cy="440" r="5.3" fill="#6b6b6b"/><circle cx="565" cy="440" r="2.6" fill="#000"/><circle cx="597.4" cy="534" r="7.8" fill="#000"/><circle cx="597.4" cy="534" r="5.3" fill="#6b6b6b"/><circle cx="597.4" cy="534" r="2.6" fill="#000"/><circle cx="583" cy="555" r="7.8" fill="#000"/><circle cx="583" cy="555" r="5.3" fill="#6b6b6b"/><circle cx="583" cy="555" r="2.6" fill="#000"/><circle cx="621" cy="576" r="7.8" fill="#000"/><circle cx="621" cy="576" r="5.3" fill="#6b6b6b"/><circle cx="621" cy="576" r="2.6" fill="#000"/><circle cx="610.5" cy="597" r="7.8" fill="#000"/><circle cx="610.5" cy="597" r="5.3" fill="#6b6b6b"/><circle cx="610.5" cy="597" r="2.6" fill="#000"/><circle cx="610.5" cy="614" r="7.8" fill="#000"/><circle cx="610.5" cy="614" r="5.3" fill="#6b6b6b"/><circle cx="610.5" cy="614" r="2.6" fill="#000"/><circle cx="565.3" cy="628" r="7.8" fill="#000"/><circle cx="565.3" cy="628" r="5.3" fill="#6b6b6b"/><circle cx="565.3" cy="628" r="2.6" fill="#000"/><circle cx="418" cy="639" r="7.8" fill="#000"/><circle cx="418" cy="639" r="5.3" fill="#6b6b6b"/><circle cx="418" cy="639" r="2.6" fill="#000"/><circle cx="463" cy="863" r="7.8" fill="#000"/><circle cx="463" cy="863" r="5.3" fill="#6b6b6b"/><circle cx="463" cy="863" r="2.6" fill="#000"/><circle cx="485" cy="842" r="7.8" fill="#000"/><circle cx="485" cy="842" r="5.3" fill="#6b6b6b"/><circle cx="485" cy="842" r="2.6" fill="#000"/><circle cx="583" cy="810" r="7.8" fill="#000"/><circle cx="583" cy="810" r="5.3" fill="#6b6b6b"/><circle cx="583" cy="810" r="2.6" fill="#000"/><circle cx="597" cy="822" r="7.8" fill="#000"/><circle cx="597" cy="822" r="5.3" fill="#6b6b6b"/><circle cx="597" cy="822" r="2.6" fill="#000"/><circle cx="611.4" cy="751" r="7.8" fill="#000"/><circle cx="611.4" cy="751" r="5.3" fill="#6b6b6b"/><circle cx="611.4" cy="751" r="2.6" fill="#000"/><rect x="437" y="624" width="20" height="25" fill="none" stroke="#000080" stroke-width="2.6" stroke-dasharray="6 4"/><rect x="503" y="624" width="20" height="25" fill="none" stroke="#000080" stroke-width="2.6" stroke-dasharray="6 4"/><rect x="378" y="653.5" width="167.5" height="21" fill="#000080"/><rect x="378" y="814" width="167.5" height="21.5" fill="#000080"/><rect x="350" y="676" width="22.5" height="137" fill="#000080"/><rect x="549" y="676" width="23" height="137" fill="#000080"/><rect x="381.0" y="656.5" width="13" height="15" fill="#ff0000"/><rect x="381.0" y="817" width="13" height="15.5" fill="#ff0000"/><rect x="399.4" y="656.5" width="13" height="15" fill="#ff0000"/><rect x="399.4" y="817" width="13" height="15.5" fill="#ff0000"/><rect x="417.8" y="656.5" width="13" height="15" fill="#ff0000"/><rect x="417.8" y="817" width="13" height="15.5" fill="#ff0000"/><rect x="436.2" y="656.5" width="13" height="15" fill="#ff0000"/><rect x="436.2" y="817" width="13" height="15.5" fill="#ff0000"/><rect x="454.6" y="656.5" width="13" height="15" fill="#ff0000"/><rect x="454.6" y="817" width="13" height="15.5" fill="#ff0000"/><rect x="473.0" y="656.5" width="13" height="15" fill="#ff0000"/><rect x="473.0" y="817" width="13" height="15.5" fill="#ff0000"/><rect x="491.4" y="656.5" width="13" height="15" fill="#ff0000"/><rect x="491.4" y="817" width="13" height="15.5" fill="#ff0000"/><rect x="509.79999999999995" y="656.5" width="13" height="15" fill="#ff0000"/><rect x="509.79999999999995" y="817" width="13" height="15.5" fill="#ff0000"/><rect x="528.2" y="656.5" width="13" height="15" fill="#ff0000"/><rect x="528.2" y="817" width="13" height="15.5" fill="#ff0000"/><rect x="353" y="678.5" width="16.5" height="14.5" fill="#ff0000"/><rect x="552" y="678.5" width="17" height="14.5" fill="#ff0000"/><rect x="353" y="697.5" width="16.5" height="14.5" fill="#ff0000"/><rect x="552" y="697.5" width="17" height="14.5" fill="#ff0000"/><rect x="353" y="716.5" width="16.5" height="14.5" fill="#ff0000"/><rect x="552" y="716.5" width="17" height="14.5" fill="#ff0000"/><rect x="353" y="735.5" width="16.5" height="14.5" fill="#ff0000"/><rect x="552" y="735.5" width="17" height="14.5" fill="#ff0000"/><rect x="353" y="754.5" width="16.5" height="14.5" fill="#ff0000"/><rect x="552" y="754.5" width="17" height="14.5" fill="#ff0000"/><rect x="353" y="773.5" width="16.5" height="14.5" fill="#ff0000"/><rect x="552" y="773.5" width="17" height="14.5" fill="#ff0000"/><rect x="353" y="792.5" width="16.5" height="14.5" fill="#ff0000"/><rect x="552" y="792.5" width="17" height="14.5" fill="#ff0000"/><rect x="350" y="653.5" width="23" height="21.5" fill="#ff0000"/><path d="M351.3 661.5 V654.8 H358 M365 654.8 H371.7 V661.5 M371.7 667.0 V673.7 H365 M358 673.7 H351.3 V667.0" fill="none" stroke="#000080" stroke-width="2.6"/><rect x="549" y="653.5" width="23" height="21.5" fill="#ff0000"/><path d="M550.3 661.5 V654.8 H557 M564 654.8 H570.7 V661.5 M570.7 667.0 V673.7 H564 M557 673.7 H550.3 V667.0" fill="none" stroke="#000080" stroke-width="2.6"/><rect x="350" y="814" width="23" height="21.5" fill="#ff0000"/><path d="M351.3 822 V815.3 H358 M365 815.3 H371.7 V822 M371.7 827.5 V834.2 H365 M358 834.2 H351.3 V827.5" fill="none" stroke="#000080" stroke-width="2.6"/><rect x="549" y="814" width="23" height="21.5" fill="#ff0000"/><path d="M550.3 822 V815.3 H557 M564 815.3 H570.7 V822 M570.7 827.5 V834.2 H564 M557 834.2 H550.3 V827.5" fill="none" stroke="#000080" stroke-width="2.6"/><circle cx="383.9" cy="685" r="5.3" fill="#6b6b6b"/><circle cx="383.9" cy="685" r="2.6" fill="#000"/><circle cx="411.7" cy="685" r="5.3" fill="#6b6b6b"/><circle cx="411.7" cy="685" r="2.6" fill="#000"/><circle cx="436.2" cy="685" r="5.3" fill="#6b6b6b"/><circle cx="436.2" cy="685" r="2.6" fill="#000"/><circle cx="460.7" cy="685" r="5.3" fill="#6b6b6b"/><circle cx="460.7" cy="685" r="2.6" fill="#000"/><circle cx="485.2" cy="685" r="5.3" fill="#6b6b6b"/><circle cx="485.2" cy="685" r="2.6" fill="#000"/><circle cx="509.6" cy="685" r="5.3" fill="#6b6b6b"/><circle cx="509.6" cy="685" r="2.6" fill="#000"/><circle cx="538" cy="685" r="5.3" fill="#6b6b6b"/><circle cx="538" cy="685" r="2.6" fill="#000"/><circle cx="383.9" cy="713" r="5.3" fill="#6b6b6b"/><circle cx="383.9" cy="713" r="2.6" fill="#000"/><circle cx="436.2" cy="713" r="5.3" fill="#6b6b6b"/><circle cx="436.2" cy="713" r="2.6" fill="#000"/><circle cx="485.2" cy="713" r="5.3" fill="#6b6b6b"/><circle cx="485.2" cy="713" r="2.6" fill="#000"/><circle cx="538" cy="713" r="5.3" fill="#6b6b6b"/><circle cx="538" cy="713" r="2.6" fill="#000"/><circle cx="383.9" cy="744.4" r="5.3" fill="#6b6b6b"/><circle cx="383.9" cy="744.4" r="2.6" fill="#000"/><circle cx="411.7" cy="744.4" r="5.3" fill="#6b6b6b"/><circle cx="411.7" cy="744.4" r="2.6" fill="#000"/><circle cx="460.7" cy="744.4" r="5.3" fill="#6b6b6b"/><circle cx="460.7" cy="744.4" r="2.6" fill="#000"/><circle cx="509.6" cy="744.4" r="5.3" fill="#6b6b6b"/><circle cx="509.6" cy="744.4" r="2.6" fill="#000"/><circle cx="538" cy="744.4" r="5.3" fill="#6b6b6b"/><circle cx="538" cy="744.4" r="2.6" fill="#000"/><circle cx="383.9" cy="772.7" r="5.3" fill="#6b6b6b"/><circle cx="383.9" cy="772.7" r="2.6" fill="#000"/><circle cx="436.2" cy="772.7" r="5.3" fill="#6b6b6b"/><circle cx="436.2" cy="772.7" r="2.6" fill="#000"/><circle cx="485.2" cy="772.7" r="5.3" fill="#6b6b6b"/><circle cx="485.2" cy="772.7" r="2.6" fill="#000"/><circle cx="538" cy="772.7" r="5.3" fill="#6b6b6b"/><circle cx="538" cy="772.7" r="2.6" fill="#000"/><circle cx="383.9" cy="803.7" r="5.3" fill="#6b6b6b"/><circle cx="383.9" cy="803.7" r="2.6" fill="#000"/><circle cx="411.7" cy="803.7" r="5.3" fill="#6b6b6b"/><circle cx="411.7" cy="803.7" r="2.6" fill="#000"/><circle cx="436.2" cy="803.7" r="5.3" fill="#6b6b6b"/><circle cx="436.2" cy="803.7" r="2.6" fill="#000"/><circle cx="460.7" cy="803.7" r="5.3" fill="#6b6b6b"/><circle cx="460.7" cy="803.7" r="2.6" fill="#000"/><circle cx="485.2" cy="803.7" r="5.3" fill="#6b6b6b"/><circle cx="485.2" cy="803.7" r="2.6" fill="#000"/><circle cx="509.6" cy="803.7" r="5.3" fill="#6b6b6b"/><circle cx="509.6" cy="803.7" r="2.6" fill="#000"/><circle cx="538" cy="803.7" r="5.3" fill="#6b6b6b"/><circle cx="538" cy="803.7" r="2.6" fill="#000"/><path d="M396 705 V695 H405 M418 695 H427 V705 M427 722 V732 H418 M405 732 H396 V722" fill="none" stroke="#000080" stroke-width="2.8"/><path d="M396 765 V755 H405 M418 755 H427 V765 M427 782 V792 H418 M405 792 H396 V782" fill="none" stroke="#000080" stroke-width="2.8"/><path d="M445 705 V695 H454 M467 695 H476 V705 M476 722 V732 H467 M454 732 H445 V722" fill="none" stroke="#000080" stroke-width="2.8"/><path d="M445 765 V755 H454 M467 755 H476 V765 M476 782 V792 H467 M454 792 H445 V782" fill="none" stroke="#000080" stroke-width="2.8"/><path d="M495 705 V695 H504 M517 695 H526 V705 M526 722 V732 H517 M504 732 H495 V722" fill="none" stroke="#000080" stroke-width="2.8"/><path d="M495 765 V755 H504 M517 755 H526 V765 M526 782 V792 H517 M504 792 H495 V782" fill="none" stroke="#000080" stroke-width="2.8"/><path d="M356 854 H351 V873 H356 M365 854 V873 M370.5 854 V873 M380 854 H384.6 V873 H380" fill="none" stroke="#000080" stroke-width="2.5"/><circle cx="280.4" cy="690.3" r="5.3" fill="#6b6b6b"/><circle cx="280.4" cy="690.3" r="2.6" fill="#000"/><circle cx="296.5" cy="690.3" r="5.3" fill="#6b6b6b"/><circle cx="296.5" cy="690.3" r="2.6" fill="#000"/><circle cx="312.5" cy="690.3" r="5.3" fill="#6b6b6b"/><circle cx="312.5" cy="690.3" r="2.6" fill="#000"/><circle cx="328.5" cy="690.3" r="5.3" fill="#6b6b6b"/><circle cx="328.5" cy="690.3" r="2.6" fill="#000"/><circle cx="280.4" cy="707.6" r="5.3" fill="#6b6b6b"/><circle cx="280.4" cy="707.6" r="2.6" fill="#000"/><circle cx="280" cy="720" r="5.3" fill="#6b6b6b"/><circle cx="280" cy="720" r="2.6" fill="#000"/><circle cx="294" cy="727" r="5.3" fill="#6b6b6b"/><circle cx="294" cy="727" r="2.6" fill="#000"/><circle cx="306" cy="735.6" r="5.3" fill="#6b6b6b"/><circle cx="306" cy="735.6" r="2.6" fill="#000"/><circle cx="306" cy="749.7" r="5.3" fill="#6b6b6b"/><circle cx="306" cy="749.7" r="2.6" fill="#000"/><circle cx="322" cy="747" r="5.3" fill="#6b6b6b"/><circle cx="322" cy="747" r="2.6" fill="#000"/><circle cx="306" cy="765.6" r="5.3" fill="#6b6b6b"/><circle cx="306" cy="765.6" r="2.6" fill="#000"/><circle cx="322" cy="765.6" r="5.3" fill="#6b6b6b"/><circle cx="322" cy="765.6" r="2.6" fill="#000"/><circle cx="338" cy="765.6" r="5.3" fill="#6b6b6b"/><circle cx="338" cy="765.6" r="2.6" fill="#000"/><circle cx="247" cy="770.6" r="5.3" fill="#6b6b6b"/><circle cx="247" cy="770.6" r="2.6" fill="#000"/><circle cx="251" cy="786" r="5.3" fill="#6b6b6b"/><circle cx="251" cy="786" r="2.6" fill="#000"/><circle cx="261" cy="796" r="5.3" fill="#6b6b6b"/><circle cx="261" cy="796" r="2.6" fill="#000"/><circle cx="275" cy="803.6" r="5.3" fill="#6b6b6b"/><circle cx="275" cy="803.6" r="2.6" fill="#000"/><circle cx="291" cy="805" r="5.3" fill="#6b6b6b"/><circle cx="291" cy="805" r="2.6" fill="#000"/><circle cx="306" cy="805" r="5.3" fill="#6b6b6b"/><circle cx="306" cy="805" r="2.6" fill="#000"/><circle cx="322" cy="805" r="5.3" fill="#6b6b6b"/><circle cx="322" cy="805" r="2.6" fill="#000"/><circle cx="338" cy="805" r="5.3" fill="#6b6b6b"/><circle cx="338" cy="805" r="2.6" fill="#000"/><path d="M311 778 V795 M322 778 V795" stroke="#000080" stroke-width="2.5"/><path d="M282 740.6 H295.3 V746 M295.3 756 V761.4 H282" fill="none" stroke="#000080" stroke-width="2.5"/><path d="M262.3 751 L303.7 785.8" stroke="#000080" stroke-width="1"/><path d="M253 696.4 H270 M253 706.8 H270" stroke="#000080" stroke-width="2.5"/><rect x="730.3" y="401" width="15.100000000000023" height="22" rx="2" fill="none" stroke="#000080" stroke-width="2.6"/><path d="M759.7 401 H755.7 V407 M755.7 417 V423 H759.7 M768.3 401 H772.3 V407 M772.3 417 V423 H768.3" fill="none" stroke="#000080" stroke-width="2.6"/><rect x="777" y="401" width="9.600000000000023" height="22" rx="2" fill="none" stroke="#000080" stroke-width="2.6"/><path d="M806.5 401 H802.5 V407 M802.5 417 V423 H806.5 M811 401 H815 V407 M815 417 V423 H811" fill="none" stroke="#000080" stroke-width="2.6"/><rect x="821.5" y="401" width="15.100000000000023" height="22" rx="2" fill="none" stroke="#000080" stroke-width="2.6"/><path d="M851 401 H847 V407 M847 417 V423 H851 M859.5 401 H863.5 V407 M863.5 417 V423 H859.5" fill="none" stroke="#000080" stroke-width="2.6"/><path d="M929 513.4 H1000 M929 531.6 H1000" stroke="#000" stroke-width="2.5"/><rect x="660" y="437.1" width="32" height="9" fill="#ff0000" stroke="#000080" stroke-width="2.6"/><rect x="737" y="437.1" width="30" height="9" fill="#ff0000" stroke="#000080" stroke-width="2.6"/><rect x="660" y="454.0" width="32" height="9" fill="#ff0000" stroke="#000080" stroke-width="2.6"/><rect x="737" y="454.0" width="30" height="9" fill="#ff0000" stroke="#000080" stroke-width="2.6"/><rect x="660" y="471.0" width="32" height="9" fill="#ff0000" stroke="#000080" stroke-width="2.6"/><rect x="737" y="471.0" width="30" height="9" fill="#ff0000" stroke="#000080" stroke-width="2.6"/><rect x="660" y="487.0" width="32" height="9" fill="#ff0000" stroke="#000080" stroke-width="2.6"/><rect x="737" y="487.0" width="30" height="9" fill="#ff0000" stroke="#000080" stroke-width="2.6"/><rect x="693" y="546" width="12" height="8" fill="#ff0000" stroke="#000080" stroke-width="2"/><rect x="693" y="559" width="12" height="8" fill="#ff0000" stroke="#000080" stroke-width="2"/><rect x="693" y="572" width="12" height="8" fill="#ff0000" stroke="#000080" stroke-width="2"/><rect x="728" y="546" width="14" height="8" fill="#ff0000" stroke="#000080" stroke-width="2"/><rect x="728" y="572" width="14" height="8" fill="#ff0000" stroke="#000080" stroke-width="2"/><path d="M686 606 V601 H692 M704 601 H711 V606 M686 622 V627 H692 M704 627 H711 V622" fill="none" stroke="#000080" stroke-width="2.6"/><rect x="975" y="430" width="30" height="14" fill="none" stroke="#000080" stroke-width="2.6" stroke-dasharray="6 4"/><rect x="975" y="448" width="30" height="14" fill="none" stroke="#000080" stroke-width="2.6" stroke-dasharray="6 4"/><rect x="975" y="466" width="30" height="14" fill="none" stroke="#000080" stroke-width="2.6" stroke-dasharray="6 4"/><rect x="975" y="484" width="30" height="14" fill="none" stroke="#000080" stroke-width="2.6" stroke-dasharray="6 4"/><rect x="975" y="502" width="30" height="14" fill="none" stroke="#000080" stroke-width="2.6" stroke-dasharray="6 4"/><circle cx="597" cy="534" r="7.8" fill="#000"/><circle cx="597" cy="534" r="5.3" fill="#6b6b6b"/><circle cx="597" cy="534" r="2.6" fill="#000"/><circle cx="636" cy="538" r="7.8" fill="#000"/><circle cx="636" cy="538" r="5.3" fill="#6b6b6b"/><circle cx="636" cy="538" r="2.6" fill="#000"/><circle cx="621.6" cy="576" r="7.8" fill="#000"/><circle cx="621.6" cy="576" r="5.3" fill="#6b6b6b"/><circle cx="621.6" cy="576" r="2.6" fill="#000"/><circle cx="649.7" cy="573" r="7.8" fill="#000"/><circle cx="649.7" cy="573" r="5.3" fill="#6b6b6b"/><circle cx="649.7" cy="573" r="2.6" fill="#000"/><circle cx="673.9" cy="597.3" r="7.8" fill="#000"/><circle cx="673.9" cy="597.3" r="5.3" fill="#6b6b6b"/><circle cx="673.9" cy="597.3" r="2.6" fill="#000"/><circle cx="758" cy="562" r="7.8" fill="#000"/><circle cx="758" cy="562" r="5.3" fill="#6b6b6b"/><circle cx="758" cy="562" r="2.6" fill="#000"/><circle cx="768.6" cy="438.8" r="7.8" fill="#000"/><circle cx="768.6" cy="438.8" r="5.3" fill="#6b6b6b"/><circle cx="768.6" cy="438.8" r="2.6" fill="#000"/><circle cx="827.8" cy="443" r="7.8" fill="#000"/><circle cx="827.8" cy="443" r="5.3" fill="#6b6b6b"/><circle cx="827.8" cy="443" r="2.6" fill="#000"/><circle cx="772.4" cy="530.7" r="7.8" fill="#000"/><circle cx="772.4" cy="530.7" r="5.3" fill="#6b6b6b"/><circle cx="772.4" cy="530.7" r="2.6" fill="#000"/><circle cx="789.6" cy="551.3" r="7.8" fill="#000"/><circle cx="789.6" cy="551.3" r="5.3" fill="#6b6b6b"/><circle cx="789.6" cy="551.3" r="2.6" fill="#000"/><circle cx="811" cy="548.5" r="7.8" fill="#000"/><circle cx="811" cy="548.5" r="5.3" fill="#6b6b6b"/><circle cx="811" cy="548.5" r="2.6" fill="#000"/><circle cx="825" cy="562" r="7.8" fill="#000"/><circle cx="825" cy="562" r="5.3" fill="#6b6b6b"/><circle cx="825" cy="562" r="2.6" fill="#000"/><circle cx="838.4" cy="548" r="7.8" fill="#000"/><circle cx="838.4" cy="548" r="5.3" fill="#6b6b6b"/><circle cx="838.4" cy="548" r="2.6" fill="#000"/><circle cx="852.8" cy="558" r="7.8" fill="#000"/><circle cx="852.8" cy="558" r="5.3" fill="#6b6b6b"/><circle cx="852.8" cy="558" r="2.6" fill="#000"/><circle cx="880" cy="550.8" r="7.8" fill="#000"/><circle cx="880" cy="550.8" r="5.3" fill="#6b6b6b"/><circle cx="880" cy="550.8" r="2.6" fill="#000"/><circle cx="853.6" cy="594" r="7.8" fill="#000"/><circle cx="853.6" cy="594" r="5.3" fill="#6b6b6b"/><circle cx="853.6" cy="594" r="2.6" fill="#000"/><circle cx="898.7" cy="533.5" r="7.8" fill="#000"/><circle cx="898.7" cy="533.5" r="5.3" fill="#6b6b6b"/><circle cx="898.7" cy="533.5" r="2.6" fill="#000"/><circle cx="953.3" cy="516.3" r="7.8" fill="#000"/><circle cx="953.3" cy="516.3" r="5.3" fill="#6b6b6b"/><circle cx="953.3" cy="516.3" r="2.6" fill="#000"/><circle cx="950.4" cy="533.5" r="7.8" fill="#000"/><circle cx="950.4" cy="533.5" r="5.3" fill="#6b6b6b"/><circle cx="950.4" cy="533.5" r="2.6" fill="#000"/><circle cx="1042.3" cy="446" r="7.8" fill="#000"/><circle cx="1042.3" cy="446" r="5.3" fill="#6b6b6b"/><circle cx="1042.3" cy="446" r="2.6" fill="#000"/><circle cx="1030.8" cy="481.8" r="7.8" fill="#000"/><circle cx="1030.8" cy="481.8" r="5.3" fill="#6b6b6b"/><circle cx="1030.8" cy="481.8" r="2.6" fill="#000"/><circle cx="708" cy="798.5" r="14" fill="#000"/><circle cx="708" cy="798.5" r="12" fill="#6b6b6b"/><circle cx="708" cy="798.5" r="7.5" fill="#000"/><circle cx="797.8" cy="798.5" r="14" fill="#000"/><circle cx="797.8" cy="798.5" r="12" fill="#6b6b6b"/><circle cx="797.8" cy="798.5" r="7.5" fill="#000"/><circle cx="708" cy="860.7" r="15.5" fill="#000"/><circle cx="708" cy="860.7" r="13" fill="#6b6b6b"/><circle cx="708" cy="860.7" r="7.5" fill="#000"/><circle cx="797.8" cy="860.7" r="15.5" fill="#000"/><circle cx="797.8" cy="860.7" r="13" fill="#6b6b6b"/><circle cx="797.8" cy="860.7" r="7.5" fill="#000"/><circle cx="883" cy="798.5" r="14" fill="#000"/><circle cx="883" cy="798.5" r="12" fill="#6b6b6b"/><circle cx="883" cy="798.5" r="7.5" fill="#000"/><circle cx="972.7" cy="798.5" r="14" fill="#000"/><circle cx="972.7" cy="798.5" r="12" fill="#6b6b6b"/><circle cx="972.7" cy="798.5" r="7.5" fill="#000"/><circle cx="883" cy="860.7" r="15.5" fill="#000"/><circle cx="883" cy="860.7" r="13" fill="#6b6b6b"/><circle cx="883" cy="860.7" r="7.5" fill="#000"/><circle cx="972.7" cy="860.7" r="15.5" fill="#000"/><circle cx="972.7" cy="860.7" r="13" fill="#6b6b6b"/><circle cx="972.7" cy="860.7" r="7.5" fill="#000"/><circle cx="1381.6" cy="798" r="14" fill="#000"/><circle cx="1381.6" cy="798" r="12" fill="#6b6b6b"/><circle cx="1381.6" cy="798" r="7.5" fill="#000"/><circle cx="1471.7" cy="798" r="14" fill="#000"/><circle cx="1471.7" cy="798" r="12" fill="#6b6b6b"/><circle cx="1471.7" cy="798" r="7.5" fill="#000"/><circle cx="1381.6" cy="859.8" r="15.5" fill="#000"/><circle cx="1381.6" cy="859.8" r="13" fill="#6b6b6b"/><circle cx="1381.6" cy="859.8" r="7.5" fill="#000"/><circle cx="1471.7" cy="859.8" r="15.5" fill="#000"/><circle cx="1471.7" cy="859.8" r="13" fill="#6b6b6b"/><circle cx="1471.7" cy="859.8" r="7.5" fill="#000"/><circle cx="838" cy="683.7" r="7.8" fill="#000"/><circle cx="838" cy="683.7" r="5.3" fill="#6b6b6b"/><circle cx="838" cy="683.7" r="2.6" fill="#000"/><circle cx="824.7" cy="709" r="7.8" fill="#000"/><circle cx="824.7" cy="709" r="5.3" fill="#6b6b6b"/><circle cx="824.7" cy="709" r="2.6" fill="#000"/><circle cx="853" cy="709" r="7.8" fill="#000"/><circle cx="853" cy="709" r="5.3" fill="#6b6b6b"/><circle cx="853" cy="709" r="2.6" fill="#000"/><circle cx="1002.6" cy="721.6" r="8.8" fill="#000"/><circle cx="1002.6" cy="721.6" r="5.8" fill="#6b6b6b"/><circle cx="1002.6" cy="721.6" r="2.8" fill="#000"/><circle cx="1030" cy="721.6" r="8.8" fill="#000"/><circle cx="1030" cy="721.6" r="5.8" fill="#6b6b6b"/><circle cx="1030" cy="721.6" r="2.8" fill="#000"/><circle cx="1058" cy="721.6" r="8.8" fill="#000"/><circle cx="1058" cy="721.6" r="5.8" fill="#6b6b6b"/><circle cx="1058" cy="721.6" r="2.8" fill="#000"/><circle cx="1086" cy="721.6" r="8.8" fill="#000"/><circle cx="1086" cy="721.6" r="5.8" fill="#6b6b6b"/><circle cx="1086" cy="721.6" r="2.8" fill="#000"/><circle cx="1113" cy="721.6" r="8.8" fill="#000"/><circle cx="1113" cy="721.6" r="5.8" fill="#6b6b6b"/><circle cx="1113" cy="721.6" r="2.8" fill="#000"/><circle cx="1141" cy="721.6" r="8.8" fill="#000"/><circle cx="1141" cy="721.6" r="5.8" fill="#6b6b6b"/><circle cx="1141" cy="721.6" r="2.8" fill="#000"/><circle cx="1168" cy="721.6" r="8.8" fill="#000"/><circle cx="1168" cy="721.6" r="5.8" fill="#6b6b6b"/><circle cx="1168" cy="721.6" r="2.8" fill="#000"/><circle cx="1196" cy="721.6" r="8.8" fill="#000"/><circle cx="1196" cy="721.6" r="5.8" fill="#6b6b6b"/><circle cx="1196" cy="721.6" r="2.8" fill="#000"/><rect x="1071" y="668" width="22" height="20" fill="none" stroke="#000080" stroke-width="2.6" stroke-dasharray="6 4"/><rect x="1102" y="668" width="22" height="20" fill="none" stroke="#000080" stroke-width="2.6" stroke-dasharray="6 4"/><rect x="1133" y="668" width="22" height="20" fill="none" stroke="#000080" stroke-width="2.6" stroke-dasharray="6 4"/><rect x="1164" y="668" width="22" height="20" fill="none" stroke="#000080" stroke-width="2.6" stroke-dasharray="6 4"/><path d="M1441.5 422 V415.5 H1447 M1458 415.5 H1464 V422 M1441.5 426 V429 M1464 426 V429" fill="none" stroke="#000080" stroke-width="2.6"/><path d="M1487.5 409 V404.5 H1493 M1501 404.5 H1506 V409 M1487.5 424 V428 H1493 M1501 428 H1506 V424" fill="none" stroke="#000080" stroke-width="2.6"/><path d="M1441.5 490.8 V484.3 H1447 M1458 484.3 H1464 V490.8 M1441.5 494.8 V497.8 M1464 494.8 V497.8" fill="none" stroke="#000080" stroke-width="2.6"/><path d="M1487.5 477.8 V473.3 H1493 M1501 473.3 H1506 V477.8 M1487.5 492.8 V496.8 H1493 M1501 496.8 H1506 V492.8" fill="none" stroke="#000080" stroke-width="2.6"/><rect x="1441.5" y="441.5" width="23" height="12.5" fill="#ff0000" stroke="#000080" stroke-width="2.6"/><rect x="1477" y="442" width="15" height="17" fill="#ff0000" stroke="#000080" stroke-width="2.6"/><rect x="1503" y="442" width="14" height="17" fill="#ff0000" stroke="#000080" stroke-width="2.6"/><rect x="1441.5" y="510.3" width="23" height="12.5" fill="#ff0000" stroke="#000080" stroke-width="2.6"/><rect x="1477" y="510.8" width="15" height="17" fill="#ff0000" stroke="#000080" stroke-width="2.6"/><rect x="1503" y="510.8" width="14" height="17" fill="#ff0000" stroke="#000080" stroke-width="2.6"/><rect x="1538.6" y="434.0" width="13.5" height="21.5" rx="3" fill="#ff0000" stroke="#000080" stroke-width="2.6"/><rect x="1563" y="434.0" width="13.6" height="21.5" rx="3" fill="#ff0000" stroke="#000080" stroke-width="2.6"/><rect x="1538.6" y="503.0" width="13.5" height="21.5" rx="3" fill="#ff0000" stroke="#000080" stroke-width="2.6"/><rect x="1563" y="503.0" width="13.6" height="21.5" rx="3" fill="#ff0000" stroke="#000080" stroke-width="2.6"/><path d="M1538.6 472 V468.5 H1552 V472 M1538.6 487 V490.5 H1552 V487 M1563 472 V468.5 H1576.6 V472 M1563 487 V490.5 H1576.6 V487" fill="none" stroke="#000080" stroke-width="2.6"/><rect x="1602.5" y="422.5" width="56.0" height="35.0" rx="3" fill="#000"/><rect x="1605.0" y="425.0" width="51" height="30" fill="#6b6b6b"/><circle cx="1630.5" cy="440" r="10.5" fill="#000"/><rect x="1602.5" y="464.2" width="56.0" height="35.0" rx="3" fill="#000"/><rect x="1605.0" y="466.7" width="51" height="30" fill="#6b6b6b"/><circle cx="1630.5" cy="481.7" r="10.5" fill="#000"/><rect x="1602.5" y="505.29999999999995" width="56.0" height="35.0" rx="3" fill="#000"/><rect x="1605.0" y="507.79999999999995" width="51" height="30" fill="#6b6b6b"/><circle cx="1630.5" cy="522.8" r="10.5" fill="#000"/><rect x="1602.5" y="547.1" width="56.0" height="35.0" rx="3" fill="#000"/><rect x="1605.0" y="549.6" width="51" height="30" fill="#6b6b6b"/><circle cx="1630.5" cy="564.6" r="10.5" fill="#000"/><circle cx="1401.6" cy="506" r="8.3" fill="#000"/><circle cx="1401.6" cy="506" r="5.3" fill="#6b6b6b"/><circle cx="1401.6" cy="506" r="2.6" fill="#000"/><circle cx="1437" cy="530.8" r="8.3" fill="#000"/><circle cx="1437" cy="530.8" r="5.3" fill="#6b6b6b"/><circle cx="1437" cy="530.8" r="2.6" fill="#000"/><path d="M357 399 V218 Q357 206 369 206 H469 Q481 206 481 218 V399 H399 V417 H357 Z" fill="none" stroke="#808000" stroke-width="3"/><path d="M451 292 H464 M457.5 285 V299" fill="none" stroke="#808000" stroke-width="2"/><text transform="translate(363.5,260.5) rotate(90)" font-size="11" font-weight="bold" fill="#808000" textLength="19.5" lengthAdjust="spacingAndGlyphs">GND</text><path d="M358 256 V296 M358 342 V380 M480 256 V296 M480 342 V380" stroke="#8a8a8a" stroke-width="2"/><path d="M526,250 L535.5,240 L553.5,240 L562,249.6 L570.5,240 L588.5,240 L597,249.6 L605.7,240 L623.7,240 L632.3,249.6 L641,240 L659,240 L667.5,249.6 L676,240 L694,240 L702.5,249.6 L711,240 L729,240 L738.6,250 L738.6,266 L729,276 L711,276 L702.5,266 L694,276 L676,276 L667.5,266 L659,276 L641,276 L632.3,266 L623.7,276 L605.7,276 L597,266 L588.5,276 L570.5,276 L562,266 L553.5,276 L535.5,276 L526,266 Z" fill="none" stroke="#434300" stroke-width="3"/><text transform="translate(556.0,235.5) scale(-1,1)" font-size="16" fill="#434300" stroke="#434300" stroke-width="0.7" textLength="30" lengthAdjust="spacingAndGlyphs">+5V</text><text transform="translate(597.35,235.5) scale(-1,1)" font-size="16" fill="#434300" stroke="#434300" stroke-width="0.7" textLength="31.5" lengthAdjust="spacingAndGlyphs">GND</text><text transform="translate(625.75,235.5) scale(-1,1)" font-size="16" fill="#434300" stroke="#434300" stroke-width="0.7" textLength="19.5" lengthAdjust="spacingAndGlyphs">TX</text><text transform="translate(660.0,235.5) scale(-1,1)" font-size="16" fill="#434300" stroke="#434300" stroke-width="0.7" textLength="20" lengthAdjust="spacingAndGlyphs">RX</text><text transform="translate(699.0,235.5) scale(-1,1)" font-size="16" fill="#434300" stroke="#434300" stroke-width="0.7" textLength="29" lengthAdjust="spacingAndGlyphs">TST</text><text transform="translate(734.6,235.5) scale(-1,1)" font-size="16" fill="#434300" stroke="#434300" stroke-width="0.7" textLength="30" lengthAdjust="spacingAndGlyphs">RST</text><path d="M785 243 H941 V347 H785 Z M785 257.5 H941" fill="none" stroke="#434300" stroke-width="3"/><path d="M816.6 229 H840.6 M828.6 218 V241 M884.8 229 H910.8" fill="none" stroke="#434300" stroke-width="3"/><path d="M786 257 H778 V270 H786 M940 330 H948 V344 H940" fill="none" stroke="#8a8a8a" stroke-width="2.5"/><circle cx="848.0" cy="340" r="4" fill="none" stroke="#8a8a8a" stroke-width="2"/><path d="M977.5 243 H1133 V347 H977.5 Z M977.5 257.5 H1133" fill="none" stroke="#434300" stroke-width="3"/><path d="M1009 229 H1033 M1021 218 V241 M1077 229 H1103" fill="none" stroke="#434300" stroke-width="3"/><path d="M978.5 257 H970.5 V270 H978.5 M1132 330 H1140 V344 H1132" fill="none" stroke="#8a8a8a" stroke-width="2.5"/><circle cx="1040.25" cy="340" r="4" fill="none" stroke="#8a8a8a" stroke-width="2"/><text transform="translate(946,329) scale(-1,1) rotate(-90)" font-size="19" fill="#434300" text-anchor="start" textLength="88" lengthAdjust="spacingAndGlyphs" stroke="#434300" stroke-width="0.6">THERMO</text><text transform="translate(1141,316) scale(-1,1) rotate(-90)" font-size="19" fill="#434300" text-anchor="start" textLength="72" lengthAdjust="spacingAndGlyphs" stroke="#434300" stroke-width="0.6">RELAY</text><text transform="translate(1531,250.5) scale(-1,1)" font-size="29" fill="#000080" textLength="311" lengthAdjust="spacing">Reflow Controller 1.0</text><text transform="translate(1531,279.2) scale(-1,1)" font-size="29" fill="#000080" textLength="340" lengthAdjust="spacing">(c) 2014 A. &amp; M. Helie</text><path d="M619 359 V319 A31 31 0 0 1 681 319 V359" fill="none" stroke="#434300" stroke-width="3"/><path d="M1518 359 V319 A31.5 31.5 0 0 1 1581 319 V359" fill="none" stroke="#434300" stroke-width="3"/><path d="M619 734 V776 A31 31 0 0 0 681 776 V734" fill="none" stroke="#434300" stroke-width="3"/><path d="M1519 734 V774 A31 31 0 0 0 1581 774 V734" fill="none" stroke="#434300" stroke-width="3"/><path d="M606 360 H1593 V734 H606 Z" fill="none" stroke="#434300" stroke-width="3"/><path d="M681 385 H1519 V615 H681 Z" fill="none" stroke="#434300" stroke-width="3"/><path d="M1593 373 L1650 389 V616 L1593 632" fill="none" stroke="#434300" stroke-width="3"/><path d="M248 538 V645 M276.5 538 V645" fill="none" stroke="#808000" stroke-width="3"/><circle cx="253" cy="634" r="3.5" fill="none" stroke="#808000" stroke-width="2"/><text transform="translate(272.8,524.6) rotate(-90)" font-size="22" fill="#808000" textLength="26" lengthAdjust="spacingAndGlyphs">U8</text><text transform="translate(268,617.4) rotate(-90)" font-size="14.7" fill="#a0a080" textLength="41.6" lengthAdjust="spacingAndGlyphs">152111</text><text transform="translate(353.7,511.6) rotate(-90)" font-size="22" fill="#808000" textLength="67.8" lengthAdjust="spacingAndGlyphs">LM1117</text><path d="M392 436 H439 V527 H392 Z" fill="none" stroke="#808000" stroke-width="3"/><text transform="translate(526,445)" font-size="22" fill="#808000" textLength="29.5" lengthAdjust="spacingAndGlyphs">C5</text><text transform="translate(526,477)" font-size="22" fill="#808000" textLength="29.5" lengthAdjust="spacingAndGlyphs">C4</text><text transform="translate(526,504)" font-size="22" fill="#808000" textLength="29.5" lengthAdjust="spacingAndGlyphs">C3</text><text transform="translate(526,531)" font-size="22" fill="#808000" textLength="29.5" lengthAdjust="spacingAndGlyphs">C2</text><path d="M497.5 428.4 H507.9 M497.5 443.2 H507.9" stroke="#808000" stroke-width="3"/><path d="M497.5 459.6 H507.9 M497.5 477.5 H507.9" stroke="#808000" stroke-width="3"/><path d="M497.5 487 H507.9 M497.5 501.2 H507.9" stroke="#808000" stroke-width="3"/><path d="M497.5 514.7 H507.9 M497.5 532.5 H507.9" stroke="#808000" stroke-width="3"/><text transform="translate(439.3,618.6)" font-size="22" fill="#808000" textLength="35.7" lengthAdjust="spacingAndGlyphs">C14</text><text transform="translate(505.9,617.4)" font-size="22" fill="#808000" textLength="35.6" lengthAdjust="spacingAndGlyphs">C13</text><rect x="348" y="651" width="226" height="187" fill="none" stroke="#8a8a8a" stroke-width="2.5"/><path d="M348 690 V651 H378 M544 651 H574 V690 M348 800 V838 H378 M544 838 H574 V800" fill="none" stroke="#808000" stroke-width="3"/><circle cx="386" cy="803" r="6.5" fill="none" stroke="#808000" stroke-width="2.5"/><path d="M345 849 H388 V877 H345 Z" fill="none" stroke="#808000" stroke-width="3"/><path d="M366 856 V871 M369 856 V871" stroke="#808000" stroke-width="1.5"/><text transform="translate(399,873)" font-size="22" fill="#808000" textLength="51" lengthAdjust="spacingAndGlyphs">TEST</text><text transform="translate(489,871)" font-size="22" fill="#808000" textLength="86" lengthAdjust="spacingAndGlyphs">CC3000</text><text transform="translate(246.8,739)" font-size="22" fill="#808000" textLength="20.6" lengthAdjust="spacingAndGlyphs">L1</text><text transform="translate(288.8,721)" font-size="22" fill="#808000" textLength="35" lengthAdjust="spacingAndGlyphs">C16</text><text transform="translate(258.9,794)" font-size="22" fill="#808000" textLength="35.5" lengthAdjust="spacingAndGlyphs">C15</text><path d="M253 697 V707 M270 697 V707" stroke="#808000" stroke-width="3.5"/><path d="M311 778 H321.6 M311 795 H321.6 M270 743 H280 M270 759 H280" stroke="#808000" stroke-width="3"/><text transform="translate(732.7,396.6)" font-size="22" fill="#808000" text-anchor="start" textLength="35.7" lengthAdjust="spacingAndGlyphs">C10</text><text transform="translate(777,396.6)" font-size="22" fill="#808000" text-anchor="start" textLength="35.8" lengthAdjust="spacingAndGlyphs">C18</text><text transform="translate(831,396.6)" font-size="22" fill="#808000" text-anchor="start" textLength="22.2" lengthAdjust="spacingAndGlyphs">C1</text><path d="M745.4 403 H755.7 M745.4 420.5 H755.7" stroke="#808000" stroke-width="2.6"/><path d="M786.6 403 H802.5 M786.6 420.5 H802.5" stroke="#808000" stroke-width="2.6"/><path d="M836.6 403 H847 M836.6 420.5 H847" stroke="#808000" stroke-width="2.6"/><rect x="686" y="434.5" width="53" height="66.5" fill="none" stroke="#8a8a8a" stroke-width="2.5"/><text transform="translate(656.6,525.4)" font-size="22" fill="#808000" textLength="113" lengthAdjust="spacingAndGlyphs">MAX31855</text><path d="M850 439 H911.6 V539.3 H850 Z" fill="none" stroke="#808000" stroke-width="3"/><circle cx="856" cy="445" r="3" fill="none" stroke="#808000" stroke-width="2"/><text transform="translate(891.7,563.4)" font-size="22" fill="#808000" textLength="163" lengthAdjust="spacingAndGlyphs">MSP430G2553</text><rect x="705" y="542" width="23" height="40" fill="none" stroke="#8a8a8a" stroke-width="2.5"/><text transform="translate(713.5,604)" font-size="22" fill="#808000" textLength="135" lengthAdjust="spacingAndGlyphs">74AHC1G125</text><text transform="translate(682,647)" font-size="22" fill="#808000" textLength="35.8" lengthAdjust="spacingAndGlyphs">C12</text><path d="M690.5 604 V616 M707.7 604 V616" stroke="#808000" stroke-width="2.6"/><text transform="translate(1015.7,447)" font-size="22" fill="#808000" textLength="25.5" lengthAdjust="spacingAndGlyphs">R9</text><text transform="translate(1015.7,472.3)" font-size="22" fill="#808000" textLength="35" lengthAdjust="spacingAndGlyphs">C17</text><text transform="translate(1015.7,497.7)" font-size="22" fill="#808000" textLength="25.5" lengthAdjust="spacingAndGlyphs">R5</text><text transform="translate(1015.7,521.4)" font-size="22" fill="#808000" textLength="25.5" lengthAdjust="spacingAndGlyphs">R4</text><path d="M720 789.0 H785.8 M720 872.2 H785.8 M711 812.5 V846.7 M795.8 812.5 V846.7" fill="none" stroke="#434300" stroke-width="3"/><circle cx="751.9" cy="830.1" r="24.5" fill="none" stroke="#434300" stroke-width="3"/><path d="M787.8 833.5 L793.8 818.5 M791.8 838.5 V850.5" stroke="#8a8a8a" stroke-width="2.5"/><text transform="translate(752.9,775) scale(-1,1)" font-size="22" fill="#434300" text-anchor="middle" font-family='"Liberation Mono",monospace'>SELECT</text><path d="M895 789.0 H960.7 M895 872.2 H960.7 M886 812.5 V846.7 M970.7 812.5 V846.7" fill="none" stroke="#434300" stroke-width="3"/><circle cx="926.85" cy="830.1" r="24.5" fill="none" stroke="#434300" stroke-width="3"/><path d="M962.7 833.5 L968.7 818.5 M966.7 838.5 V850.5" stroke="#8a8a8a" stroke-width="2.5"/><text transform="translate(927.85,775) scale(-1,1)" font-size="22" fill="#434300" text-anchor="middle" font-family='"Liberation Mono",monospace'>RUN</text><path d="M1393.6 788.5 H1459.7 M1393.6 871.3 H1459.7 M1384.6 812 V845.8 M1469.7 812 V845.8" fill="none" stroke="#434300" stroke-width="3"/><circle cx="1425.65" cy="829.4" r="24.5" fill="none" stroke="#434300" stroke-width="3"/><path d="M1461.7 833 L1467.7 818 M1465.7 838 V850" stroke="#8a8a8a" stroke-width="2.5"/><text transform="translate(1426.65,775) scale(-1,1)" font-size="22" fill="#434300" text-anchor="middle" font-family='"Liberation Mono",monospace'>RESET</text><text transform="translate(1091,662.5) rotate(-90)" font-size="22" fill="#808000" textLength="26" lengthAdjust="spacingAndGlyphs">C9</text><text transform="translate(1121.8,662.5) rotate(-90)" font-size="22" fill="#808000" textLength="26" lengthAdjust="spacingAndGlyphs">C6</text><text transform="translate(1152,662.5) rotate(-90)" font-size="22" fill="#808000" textLength="26" lengthAdjust="spacingAndGlyphs">C8</text><text transform="translate(1181.7,662.5) rotate(-90)" font-size="22" fill="#808000" textLength="26" lengthAdjust="spacingAndGlyphs">C7</text><path d="M1074 685 V693 M1090 685 V693" stroke="#808000" stroke-width="2.5"/><path d="M1105 685 V693 M1121 685 V693" stroke="#808000" stroke-width="2.5"/><path d="M1136 685 V693 M1152 685 V693" stroke="#808000" stroke-width="2.5"/><path d="M1167 685 V693 M1183 685 V693" stroke="#808000" stroke-width="2.5"/><text transform="translate(1439.7,416.3)" font-size="22" fill="#808000" textLength="27" lengthAdjust="spacingAndGlyphs">R8</text><text transform="translate(1508.8,416.3)" font-size="22" fill="#808000" textLength="24" lengthAdjust="spacingAndGlyphs">M1</text><text transform="translate(1439.7,485)" font-size="22" fill="#808000" textLength="27" lengthAdjust="spacingAndGlyphs">R7</text><text transform="translate(1507,485)" font-size="22" fill="#808000" textLength="26" lengthAdjust="spacingAndGlyphs">M2</text><text transform="translate(1578,454.5)" font-size="22" fill="#808000" textLength="26" lengthAdjust="spacingAndGlyphs">R1</text><text transform="translate(1578,489)" font-size="22" fill="#808000" textLength="26" lengthAdjust="spacingAndGlyphs">R2</text><text transform="translate(1578,525)" font-size="22" fill="#808000" textLength="26" lengthAdjust="spacingAndGlyphs">R6</text><path d="M1445 431.6 V441 M1461.4 431.6 V441" stroke="#808000" stroke-width="3"/><path d="M1445 500.40000000000003 V509.8 M1461.4 500.40000000000003 V509.8" stroke="#808000" stroke-width="3"/><path d="M1477.5 443 V422 H1517 V443 M1491.8 441.3 H1503" fill="none" stroke="#8a8a8a" stroke-width="2.8"/><path d="M1477.5 511.8 V490.8 H1517 V511.8 M1491.8 510.1 H1503" fill="none" stroke="#8a8a8a" stroke-width="2.8"/><path d="M1552.8 436.8 H1563.2 M1552.8 454.0 H1563.2" stroke="#808000" stroke-width="3"/><path d="M1552.8 505.8 H1563.2 M1552.8 523.0 H1563.2" stroke="#808000" stroke-width="3"/><path d="M1552.8 471 H1563.2 M1552.8 488 H1563.2" stroke="#808000" stroke-width="3"/><path d="M250 207.5 H1675 M250 891.5 H1675" stroke="#800080" stroke-width="2.5" stroke-dasharray="3 18"/><path d="M236 212 V892 M1673.5 216 V892" stroke="#800080" stroke-width="2.5" stroke-dasharray="3 18.3"/></svg><div class="a" style="left:234px;top:990px;width:1466px;height:11px;background:#eef4fc"></div><div class="a" style="left:622px;top:991px;width:405px;height:9px;background:linear-gradient(#e6f0fb,#d2e2f4);border:1px solid #c0d4ea;border-radius:5px"></div><div class="a" style="left:211px;top:1000px;width:1495px;height:1px;background:#a8c4e0"></div><div class="a" style="left:1699px;top:146px;width:7px;height:845px;background:#eef4fc"></div><div class="a" style="left:1699px;top:345px;width:9px;height:168px;background:linear-gradient(90deg,#e8f2fd,#d0e2f6);border:1px solid #a8c8ee;border-radius:4px"></div><div class="a" style="left:1404px;top:39px;width:152px;height:104px;background:#f8f8f8;border:1px solid #a8c8e4;box-shadow:0 1px 4px rgba(0,0,0,.45)"></div><div class="a" style="left:1405px;top:40px;width:150px;height:21px;background:#ddeafa;border-bottom:1px solid #b8d0ea"></div><div class="t" style="left:1406px;top:41px;font-size:12.5px;line-height:14px;font-weight:bold;color:#222">PCB Tools</div><svg class="a" style="left:1537px;top:45px" width="17" height="11"><rect x="0.75" y="0.75" width="15" height="9" rx="2" fill="#e8f8e8" stroke="#1a9a1a" stroke-width="1.5"/><rect x="3" y="3" width="10.5" height="4.5" fill="#1a9a1a"/></svg><svg class="a" style="left:1405px;top:62px" width="150" height="80"><g transform="translate(16.5,16)"><path d="M-7 -6 H-1 V6.5 H7" stroke="#111" stroke-width="1.8" fill="none"/></g><g transform="translate(39.799999999999955,16)"><circle r="4.8" fill="#e8e8e8" stroke="#666" stroke-width="2.8"/></g><g transform="translate(65,16)"><path d="M-2 -2 V7" stroke="#991010" stroke-width="2.6"/><path d="M-2 -6 L1 -3 L-2 0 L-5 -3 Z" fill="#fff" stroke="#222" stroke-width="1.2"/><path d="M1 -3 H8" stroke="#1a2ac0" stroke-width="2.6"/></g><g transform="translate(88.29999999999995,16)"><text x="-6.5" y="7" font-family="Liberation Serif, serif" font-weight="bold" font-size="19" fill="#111">T</text></g><g transform="translate(111.59999999999991,16)"><path d="M-5.5 -6.5 L5.5 6.5" stroke="#111" stroke-width="1.6"/><circle cx="-6" cy="-7" r="1.8" fill="#fff" stroke="#111" stroke-width="1.2"/><circle cx="6" cy="7" r="1.8" fill="#fff" stroke="#111" stroke-width="1.2"/></g><g transform="translate(135.79999999999995,16)"><path d="M-3 -6 H7 V2 H-3 Z M-7 -2 H1 V6 H-7 Z" fill="none" stroke="#333" stroke-width="1.2" stroke-dasharray="1.6 1.2"/></g><g transform="translate(16.5,40.400000000000006)"><path d="M-7.5 5.5 V-0.5 H-2 V-4.5 H8 V1.5 H2 V5.5 Z" fill="none" stroke="#111" stroke-width="1.5"/></g><g transform="translate(39.799999999999955,40.400000000000006)"><path d="M-6.5 6.5 L7 -7" stroke="#111" stroke-width="1.4" stroke-dasharray="2.5 1.5"/><path d="M-1 -1 L2 -4 L4 -2 L1 1 Z" fill="#fff" stroke="#111" stroke-width="1.2"/><circle cx="-6.5" cy="6.5" r="1.2" fill="#111"/><circle cx="7" cy="-7" r="1.2" fill="#111"/></g><g transform="translate(65,40.400000000000006)"><path d="M-2 7 A7.5 7.5 0 1 1 7.5 1" stroke="#111" stroke-width="1.5" fill="none"/><path d="M5.5 -0.5 L8.5 3 L9 -1 Z" fill="#111"/><circle cx="0" cy="0" r="0.8" fill="#111"/></g><g transform="translate(88.29999999999995,40.400000000000006)"><rect x="-7" y="-6.5" width="14" height="13.5" fill="none" stroke="#111" stroke-width="1.6"/></g><g transform="translate(111.59999999999991,40.400000000000006)"><ellipse rx="7.2" ry="6.2" fill="none" stroke="#111" stroke-width="1.5"/></g><g transform="translate(135.79999999999995,40.400000000000006)"><rect x="-4" y="-3" width="9" height="9" fill="none" stroke="#111" stroke-width="1.6"/><path d="M-7 -7 V4 M-7 -7 H6" stroke="#111" stroke-width="1"/><g fill="#111"><rect x="-8.5" y="-8.5" width="3" height="3"/><rect x="5" y="-8.5" width="3" height="3"/><rect x="-8.5" y="5" width="3" height="3"/><rect x="5" y="5" width="3" height="3"/></g></g><g transform="translate(16.5,64.6)"><path d="M-2 8 C-5 5 -8 1 -8 -2 C-8 -3.5 -6 -3.5 -5.5 -2 L-4.5 0 V-7 C-4.5 -8.5 -2 -8.5 -2 -7 V-2 V-9 C-2 -10.5 0.5 -10.5 0.5 -9 V-2 V-8 C0.5 -9.5 3 -9.5 3 -8 V-2 V-6 C3 -7.5 5.5 -7.5 5.5 -6 V2 C5.5 5 4 7 3 8" fill="#fff" stroke="#111" stroke-width="1.2"/></g><g transform="translate(39.799999999999955,64.6)"><circle r="4.8" fill="none" stroke="#111" stroke-width="1.5"/><path d="M-7.5 -7 L-3.5 -3 M7.5 -7 L3.5 -3 M-7.5 7.5 L-3.5 3.5 M7.5 7.5 L3.5 3.5" stroke="#111" stroke-width="1.4"/></g></svg><div class="a" style="left:1555px;top:38px;width:151px;height:121px;background:#e4e8f6;border:1px solid #a8b8d0;box-shadow:0 1px 4px rgba(0,0,0,.45)"></div><div class="a" style="left:1556px;top:39px;width:150px;height:22px;background:#ddeafa"></div><div class="t" style="left:1562px;top:43px;font-size:12.5px;line-height:14px;font-weight:bold;color:#222">Layers</div><svg class="a" style="left:1686px;top:41px" width="17" height="17"><g transform="translate(8.5,8.5)" fill="#222"><circle r="5.5"/><rect x="-1.8" y="-8" width="3.6" height="4" transform="rotate(0)"/><rect x="-1.8" y="-8" width="3.6" height="4" transform="rotate(45)"/><rect x="-1.8" y="-8" width="3.6" height="4" transform="rotate(90)"/><rect x="-1.8" y="-8" width="3.6" height="4" transform="rotate(135)"/><rect x="-1.8" y="-8" width="3.6" height="4" transform="rotate(180)"/><rect x="-1.8" y="-8" width="3.6" height="4" transform="rotate(225)"/><rect x="-1.8" y="-8" width="3.6" height="4" transform="rotate(270)"/><rect x="-1.8" y="-8" width="3.6" height="4" transform="rotate(315)"/><circle r="2.3" fill="#ddeafa"/></g></svg><div class="a" style="left:1558px;top:62px;width:32px;height:23px;background:#ff0000"></div><div class="a" style="left:1590px;top:62px;width:116px;height:23px;background:#e2ecf8;border-bottom:1px solid #c8c8d8"></div><div class="a" style="left:1621px;top:62px;width:1px;height:23px;background:#999"></div><svg class="a" style="left:1597px;top:68px" width="18" height="11"><path d="M1 5.5 Q9 -2 17 5.5 Q9 13 1 5.5 Z" fill="#f4f4f4" stroke="#666" stroke-width="1.3"/><circle cx="9" cy="5.5" r="3" fill="#445"/></svg><div class="t" style="left:1628px;top:66px;font-size:12.5px;line-height:14px;color:#2020d0">TopLayer</div><div class="a" style="left:1558px;top:86px;width:32px;height:23px;background:#0000ff"></div><div class="a" style="left:1590px;top:86px;width:116px;height:23px;background:#e8e6fa;border-bottom:1px solid #c8c8d8"></div><div class="a" style="left:1621px;top:86px;width:1px;height:23px;background:#999"></div><svg class="a" style="left:1597px;top:92px" width="18" height="11"><path d="M1 5.5 Q9 -2 17 5.5 Q9 13 1 5.5 Z" fill="#f4f4f4" stroke="#666" stroke-width="1.3"/><circle cx="9" cy="5.5" r="3" fill="#445"/></svg><div class="t" style="left:1628px;top:90px;font-size:12.5px;line-height:14px;color:#222">BottomLayer</div><div class="a" style="left:1558px;top:110px;width:32px;height:23px;background:#ffff00"></div><div class="a" style="left:1590px;top:110px;width:116px;height:23px;background:#e8e6fa;border-bottom:1px solid #c8c8d8"></div><div class="a" style="left:1621px;top:110px;width:1px;height:23px;background:#999"></div><svg class="a" style="left:1597px;top:116px" width="18" height="11"><path d="M1 5.5 Q9 -2 17 5.5 Q9 13 1 5.5 Z" fill="#f4f4f4" stroke="#666" stroke-width="1.3"/><circle cx="9" cy="5.5" r="3" fill="#445"/></svg><div class="t" style="left:1628px;top:114px;font-size:12.5px;line-height:14px;color:#222">TopSilkLayer</div><div class="a" style="left:1558px;top:134px;width:32px;height:23px;background:#808000"></div><div class="a" style="left:1590px;top:134px;width:116px;height:23px;background:#e8e6fa;border-bottom:1px solid #c8c8d8"></div><div class="a" style="left:1621px;top:134px;width:1px;height:23px;background:#999"></div><svg class="a" style="left:1597px;top:140px" width="18" height="11"><path d="M1 5.5 Q9 -2 17 5.5 Q9 13 1 5.5 Z" fill="#f4f4f4" stroke="#666" stroke-width="1.3"/><circle cx="9" cy="5.5" r="3" fill="#445"/></svg><div class="t" style="left:1628px;top:138px;font-size:12.5px;line-height:14px;color:#222">BottomSilkLayer</div><svg class="a" style="left:1562px;top:64px" width="22" height="20"><path d="M4 16 L7 10 L15 2 L19 6 L11 14 Z" fill="#f0c030" stroke="#a07010" stroke-width="0.8"/><path d="M15 2 L19 6 L20 5 L16 1 Z" fill="#e88"/><path d="M4 16 L7 10 L10 13 Z" fill="#f8e0b0"/></svg><div class="a" style="left:55px;top:800px;width:137px;height:157px;background:#f8f8f8;border:1px solid #9ad0e8;box-shadow:0 0 5px 1px rgba(0,0,0,.55)"></div><div class="a" style="left:56px;top:801px;width:135px;height:21px;background:#dceafa;border-bottom:1px solid #b8e0f0"></div><div class="t" style="left:57px;top:802px;font-size:12.5px;line-height:14px;color:#222">Preview</div><svg class="a" style="left:132px;top:802px" width="58" height="18"><path d="M2 15 L4 10 L12 2 L15 5 L7 13 Z" fill="#bbb" stroke="#555" stroke-width="1"/><path d="M19 6 H24 V3 L30 8.5 L24 14 V11 H19 Z" fill="#ddd" stroke="#777" stroke-width="1"/><rect x="38.5" y="4" width="16" height="10" rx="2" fill="#e8f8e8" stroke="#1a9a1a" stroke-width="1.3"/><rect x="41" y="6.5" width="11" height="5" fill="#1a9a1a"/></svg><svg class="a" style="left:180px;top:945px" width="10" height="10"><path d="M1 9 L9 1 M5 9 L9 5" stroke="#888" stroke-width="1"/></svg>
</body></html>
